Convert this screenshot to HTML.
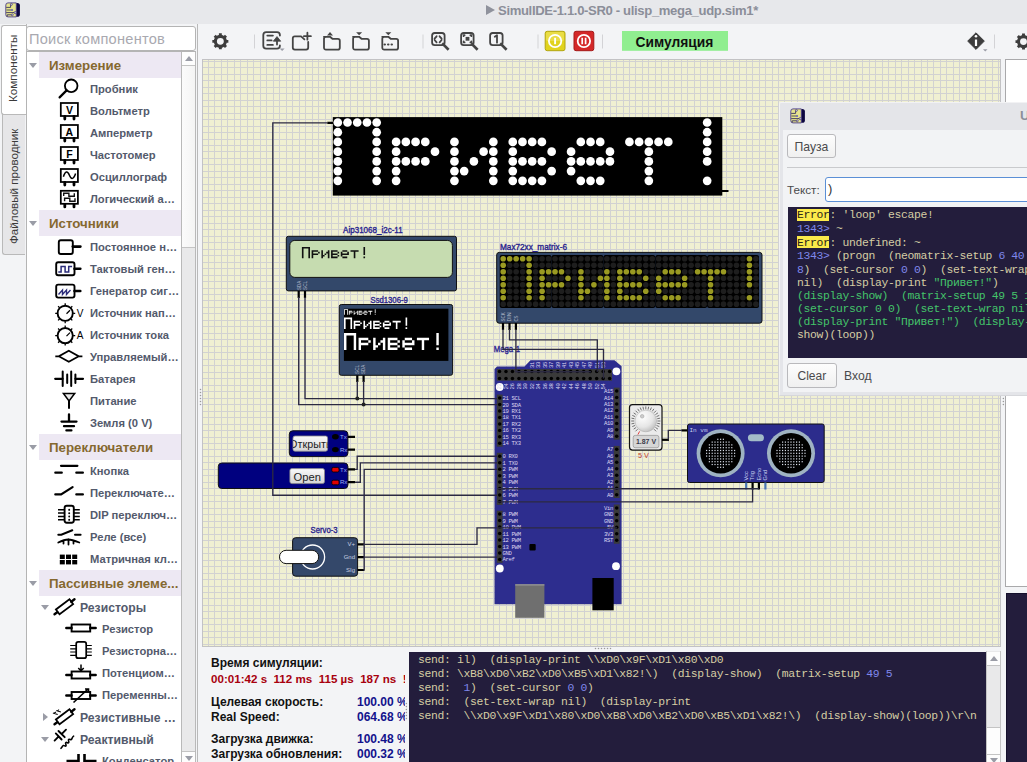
<!DOCTYPE html><html><head><meta charset="utf-8"><style>

*{box-sizing:border-box}
html,body{margin:0;padding:0}
body{width:1027px;height:762px;overflow:hidden;position:relative;background:#f3f4f6;font-family:"Liberation Sans",sans-serif}
.a{position:absolute}
.ti{position:absolute;left:0;white-space:pre;font-weight:bold;font-size:11px;color:#4f5668}
.cat{position:absolute;left:13px;width:142px;height:26px;background:#ede8f3}
.cat b{position:absolute;left:10px;top:5px;font-size:13px;color:#84672f;white-space:pre;letter-spacing:0.15px}
.arr{position:absolute;width:0;height:0;border-left:4px solid transparent;border-right:4px solid transparent;border-top:5px solid #9a9ca6}
.arr2{position:absolute;width:0;height:0;border-top:4px solid transparent;border-bottom:4px solid transparent;border-left:5px solid #9a9ca6}
.mono{font-family:"Liberation Mono",monospace}

</style></head><body>
<div class="a" style="left:0;top:0;width:1027px;height:24px;background:#e7e8eb"></div>
<svg class="a" style="left:0;top:0" width="24" height="22"><g transform="translate(0 0)"><rect x="14" y="3" width="5.9" height="13.8" rx="2.6" fill="#0c0640"/><path d="M8 2.9H16.3V16.9H8A2.2 2.2 0 0 1 5.8 14.7V5.1A2.2 2.2 0 0 1 8 2.9Z" fill="#e6e48e" stroke="#4a3c86" stroke-width="0.9"/><path d="M6.2 7.4H10.6V4.6M6.2 12.6H14.8M7.2 16.5V14.8H11.8" stroke="#3a3360" stroke-width="0.9" fill="none"/><path d="M6.4 10H11.2" stroke="#8c8a6a" stroke-width="1.6"/><circle cx="11.4" cy="4.4" r="1" fill="#c8c0ec" stroke="#3a3360" stroke-width="0.6"/><circle cx="12" cy="10" r="1.1" fill="#6a62b4"/><circle cx="15.2" cy="12.6" r="1.1" fill="#c8c0ec" stroke="#3a3360" stroke-width="0.6"/><circle cx="12.3" cy="14.8" r="1" fill="#c8c0ec" stroke="#3a3360" stroke-width="0.6"/></g></svg>
<div class="a" style="left:486px;top:5px;width:0;height:0;border-top:5px solid transparent;border-bottom:5px solid transparent;border-left:9px solid #8f929c"></div>
<div class="a" style="left:498px;top:2.5px;white-space:pre;font-weight:bold;font-size:13.1px;letter-spacing:-0.35px;color:#8b8e99">SimulIDE-1.1.0-SR0 - ulisp_mega_udp.sim1*</div>
<div class="a" style="left:1px;top:25px;width:26px;height:90px;background:#fff;border:1px solid #b9b9b9;border-right:none;border-radius:3px 0 0 3px"></div>
<div class="a" style="left:6px;top:102px;transform-origin:0 0;transform:rotate(-90deg);white-space:pre;font-size:11.7px;color:#3a3a3a;line-height:14px">Компоненты</div>
<div class="a" style="left:2px;top:114px;width:23px;height:141px;background:#e6e6e8;border:1px solid #b9b9b9;border-right:none;border-radius:0 0 0 3px"></div>
<div class="a" style="left:7px;top:243.5px;transform-origin:0 0;transform:rotate(-90deg);white-space:pre;font-size:11.6px;color:#3a3a3a;line-height:14px">Файловый проводник</div>
<div class="a" style="left:26px;top:24px;width:1px;height:738px;background:#b9b9b9"></div>
<div class="a" style="left:26px;top:26px;width:170px;height:25px;background:#fff;border:1px solid #b4b4b4;border-radius:3px"></div>
<div class="a" style="left:29px;top:30px;white-space:pre;font-size:14.6px;letter-spacing:0.25px;color:#a9a9b0;line-height:18px">Поиск компонентов</div>
<div class="a" style="left:26px;top:51px;width:170px;height:711px;background:#fff;border:1px solid #b4b4b4;border-bottom:none"></div>
<div class="a" style="left:181px;top:52px;width:15px;height:710px;background:#e9e9ea;border-left:1px solid #b9b9b9;border-right:1px solid #b9b9b9"></div>
<div class="a" style="left:182px;top:52px;width:13px;height:14px;background:#fdfdfd;border-bottom:1px solid #c4c4c4"></div>
<div class="a" style="left:185px;top:56px;width:0;height:0;border-left:4px solid transparent;border-right:4px solid transparent;border-bottom:5px solid #9a9ca6"></div>
<div class="a" style="left:182px;top:66px;width:13px;height:182px;background:linear-gradient(90deg,#fbfbfb,#f4f4f4);border-bottom:1px solid #c4c4c4"></div>
<div class="a" style="left:182px;top:751px;width:13px;height:11px;background:#fdfdfd;border-top:1px solid #c4c4c4"></div>
<div class="a" style="left:185px;top:756px;width:0;height:0;border-left:4px solid transparent;border-right:4px solid transparent;border-top:5px solid #9a9ca6"></div>
<div class="a" style="left:197px;top:24px;width:1px;height:738px;background:#b9b9b9"></div>
<div class="a" style="left:39px;top:52px;width:142px;height:26px;background:#ede8f3"></div>
<div class="arr" style="left:29px;top:63px"></div>
<div class="a" style="left:49px;top:58px;white-space:pre;font-weight:bold;font-size:13.3px;color:#85682f;line-height:16px">Измерение</div>
<div class="a" style="left:39px;top:210px;width:142px;height:26px;background:#ede8f3"></div>
<div class="arr" style="left:29px;top:221px"></div>
<div class="a" style="left:49px;top:216px;white-space:pre;font-weight:bold;font-size:13.3px;color:#85682f;line-height:16px">Источники</div>
<div class="a" style="left:39px;top:434px;width:142px;height:26px;background:#ede8f3"></div>
<div class="arr" style="left:29px;top:445px"></div>
<div class="a" style="left:49px;top:440px;white-space:pre;font-weight:bold;font-size:13.3px;color:#85682f;line-height:16px">Переключатели</div>
<div class="a" style="left:39px;top:570px;width:142px;height:26px;background:#ede8f3"></div>
<div class="arr" style="left:29px;top:581px"></div>
<div class="a" style="left:49px;top:576px;white-space:pre;font-weight:bold;font-size:13.3px;color:#85682f;line-height:16px">Пассивные элеме...</div>
<div class="a" style="left:90px;top:82px;white-space:pre;font-weight:bold;font-size:11.2px;color:#535a6c;line-height:14px">Пробник</div>
<div class="a" style="left:90px;top:104px;white-space:pre;font-weight:bold;font-size:11.2px;color:#535a6c;line-height:14px">Вольтметр</div>
<div class="a" style="left:90px;top:126px;white-space:pre;font-weight:bold;font-size:11.2px;color:#535a6c;line-height:14px">Амперметр</div>
<div class="a" style="left:90px;top:148px;white-space:pre;font-weight:bold;font-size:11.2px;color:#535a6c;line-height:14px">Частотомер</div>
<div class="a" style="left:90px;top:170px;white-space:pre;font-weight:bold;font-size:11.2px;color:#535a6c;line-height:14px">Осциллограф</div>
<div class="a" style="left:90px;top:192px;white-space:pre;font-weight:bold;font-size:11.2px;color:#535a6c;line-height:14px">Логический а…</div>
<div class="a" style="left:90px;top:240px;white-space:pre;font-weight:bold;font-size:11.2px;color:#535a6c;line-height:14px">Постоянное н…</div>
<div class="a" style="left:90px;top:262px;white-space:pre;font-weight:bold;font-size:11.2px;color:#535a6c;line-height:14px">Тактовый ген…</div>
<div class="a" style="left:90px;top:284px;white-space:pre;font-weight:bold;font-size:11.2px;color:#535a6c;line-height:14px">Генератор сиг…</div>
<div class="a" style="left:90px;top:306px;white-space:pre;font-weight:bold;font-size:11.2px;color:#535a6c;line-height:14px">Источник нап…</div>
<div class="a" style="left:90px;top:328px;white-space:pre;font-weight:bold;font-size:11.2px;color:#535a6c;line-height:14px">Источник тока</div>
<div class="a" style="left:90px;top:350px;white-space:pre;font-weight:bold;font-size:11.2px;color:#535a6c;line-height:14px">Управляемый…</div>
<div class="a" style="left:90px;top:372px;white-space:pre;font-weight:bold;font-size:11.2px;color:#535a6c;line-height:14px">Батарея</div>
<div class="a" style="left:90px;top:394px;white-space:pre;font-weight:bold;font-size:11.2px;color:#535a6c;line-height:14px">Питание</div>
<div class="a" style="left:90px;top:416px;white-space:pre;font-weight:bold;font-size:11.2px;color:#535a6c;line-height:14px">Земля (0 V)</div>
<div class="a" style="left:90px;top:464px;white-space:pre;font-weight:bold;font-size:11.2px;color:#535a6c;line-height:14px">Кнопка</div>
<div class="a" style="left:90px;top:486px;white-space:pre;font-weight:bold;font-size:11.2px;color:#535a6c;line-height:14px">Переключате…</div>
<div class="a" style="left:90px;top:508px;white-space:pre;font-weight:bold;font-size:11.2px;color:#535a6c;line-height:14px">DIP переключ…</div>
<div class="a" style="left:90px;top:530px;white-space:pre;font-weight:bold;font-size:11.2px;color:#535a6c;line-height:14px">Реле (все)</div>
<div class="a" style="left:90px;top:552px;white-space:pre;font-weight:bold;font-size:11.2px;color:#535a6c;line-height:14px">Матричная кл…</div>
<div class="arr" style="left:41px;top:605px"></div>
<div class="a" style="left:80px;top:599.8px;white-space:pre;font-weight:bold;font-size:12.2px;color:#535a6c;line-height:16px">Резисторы</div>
<div class="arr2" style="left:43px;top:713px"></div>
<div class="a" style="left:80px;top:709.8px;white-space:pre;font-weight:bold;font-size:12.2px;color:#535a6c;line-height:16px">Резистивные …</div>
<div class="arr" style="left:41px;top:737px"></div>
<div class="a" style="left:80px;top:731.8px;white-space:pre;font-weight:bold;font-size:12.2px;color:#535a6c;line-height:16px">Реактивный</div>
<div class="a" style="left:102px;top:622px;white-space:pre;font-weight:bold;font-size:11.2px;color:#535a6c;line-height:14px">Резистор</div>
<div class="a" style="left:102px;top:644px;white-space:pre;font-weight:bold;font-size:11.2px;color:#535a6c;line-height:14px">Резисторна…</div>
<div class="a" style="left:102px;top:666px;white-space:pre;font-weight:bold;font-size:11.2px;color:#535a6c;line-height:14px">Потенциом…</div>
<div class="a" style="left:102px;top:688px;white-space:pre;font-weight:bold;font-size:11.2px;color:#535a6c;line-height:14px">Переменны…</div>
<div class="a" style="left:102px;top:754px;white-space:pre;font-weight:bold;font-size:11.2px;color:#535a6c;line-height:14px">Конденсатор</div>
<svg class="a" style="left:0;top:0" width="200" height="762"><circle cx="71.2" cy="85.8" r="6.3" stroke="#000" fill="none" stroke-width="1.8"/><path d="M66.6 90.4L59.6 97.4" stroke="#000" fill="none" stroke-width="2.2" stroke-linecap="round"/><rect x="60.8" y="103.0" width="17.1" height="13" stroke="#000" fill="none" stroke-width="1.75"/><path d="M64.8 116.5v2.6M74 116.5v2.6" stroke="#000" fill="none" stroke-width="2.8" stroke-linecap="round"/><text x="69.4" y="113.6" font-family="Liberation Sans" font-weight="bold" font-size="10.5" text-anchor="middle" fill="#000">V</text><rect x="60.8" y="125.0" width="17.1" height="13" stroke="#000" fill="none" stroke-width="1.75"/><path d="M64.8 138.5v2.6M74 138.5v2.6" stroke="#000" fill="none" stroke-width="2.8" stroke-linecap="round"/><text x="69.4" y="135.6" font-family="Liberation Sans" font-weight="bold" font-size="10.5" text-anchor="middle" fill="#000">A</text><rect x="60.8" y="147.0" width="17.1" height="13" stroke="#000" fill="none" stroke-width="1.75"/><path d="M64.8 160.5v2.6M74 160.5v2.6" stroke="#000" fill="none" stroke-width="2.8" stroke-linecap="round"/><text x="69.4" y="157.6" font-family="Liberation Sans" font-weight="bold" font-size="10.5" text-anchor="middle" fill="#000">F</text><rect x="60.8" y="169.0" width="17.1" height="13" stroke="#000" fill="none" stroke-width="1.75"/><path d="M64.8 182.5v2.6M74 182.5v2.6" stroke="#000" fill="none" stroke-width="2.8" stroke-linecap="round"/><path d="M63.4 176.8C65.3 170.8 67.6 170.8 69.4 175.2S73.6 179.8 75.6 173.6" stroke="#000" fill="none" stroke-width="1.5"/><rect x="60.8" y="190.8" width="17.1" height="13" stroke="#000" fill="none" stroke-width="1.75"/><path d="M64.8 204.3v2.6M74 204.3v2.6" stroke="#000" fill="none" stroke-width="2.8" stroke-linecap="round"/><path d="M63.7 196.1v-2.9h5.2v3.1h5.4v-3.1M64.6 201.3v-3.1h5.2v3.1h5.2v-3.1" stroke="#111" fill="none" stroke-width="1.4"/><rect x="58.8" y="240.2" width="14" height="13.8" rx="2" stroke="#000" fill="none" stroke-width="1.9"/><path d="M72.8 246.6h7.6" stroke="#000" fill="none" stroke-width="2.6" stroke-linecap="round"/><rect x="56.2" y="262.3" width="18.3" height="13" rx="2" stroke="#000" fill="none" stroke-width="1.9"/><path d="M74.5 268.8h5.8" stroke="#000" fill="none" stroke-width="2.6" stroke-linecap="round"/><path d="M58.3 272h2.8v-5.5h4v5.5h3.6v-5.5h3.4" stroke="#2b2c7a" fill="none" stroke-width="1.5"/><rect x="56.2" y="284.6" width="18.3" height="13" rx="2" stroke="#000" fill="none" stroke-width="1.9"/><path d="M74.5 291h5.8" stroke="#000" fill="none" stroke-width="2.6" stroke-linecap="round"/><path d="M58.5 294.5l4-4.5v4.5l4-4.5v4.5l4-4.5" stroke="#2b2c7a" fill="none" stroke-width="1.4"/><circle cx="65.2" cy="313.3" r="7.6" stroke="#000" fill="none" stroke-width="1.9"/><path d="M59.5 307.6L58.1 306.2M65.2 305.3L65.2 303.3M70.9 307.6L72.3 306.2M73.2 313.3L75.2 313.3M57.2 313.3L55.2 313.3M59.5 319.0L58.1 320.4M70.9 319.0L72.3 320.4M65.2 321.3L65.2 323.3" stroke="#000" fill="none" stroke-width="1.3"/><path d="M66.5 313.8L70 310.3" stroke="#000" fill="none" stroke-width="1.3"/><text x="76.8" y="317.1" font-family="Liberation Sans" font-size="10" fill="#000">V</text><circle cx="65.2" cy="335.6" r="7.6" stroke="#000" fill="none" stroke-width="1.9"/><path d="M59.5 329.9L58.1 328.5M65.2 327.6L65.2 325.6M70.9 329.9L72.3 328.5M73.2 335.6L75.2 335.6M57.2 335.6L55.2 335.6M59.5 341.3L58.1 342.7M70.9 341.3L72.3 342.7M65.2 343.6L65.2 345.6" stroke="#000" fill="none" stroke-width="1.3"/><path d="M66.5 336.1L70 332.6" stroke="#000" fill="none" stroke-width="1.3"/><text x="76.8" y="339.40000000000003" font-family="Liberation Sans" font-size="10" fill="#000">A</text><path d="M55.3 356.3h3.5l10-5.5l10 5.5h3.6M58.8 356.3l10 5.5l10-5.5" stroke="#000" fill="none" stroke-width="1.7"/><path d="M55.2 378.8h7.4M75.4 378.8h7.6" stroke="#000" fill="none" stroke-width="2.2" stroke-linecap="round"/><path d="M62.7 371.6v14.4M71.2 371.6v14.4" stroke="#000" fill="none" stroke-width="2" stroke-linecap="round"/><path d="M67.2 374.5v8.6M75.4 374.5v8.6" stroke="#000" fill="none" stroke-width="2" stroke-linecap="round"/><path d="M63.4 393.4h11.3l-5.65 7.6z" stroke="#000" fill="#e8e8e8" stroke-width="1.5"/><path d="M69 401v7" stroke="#000" stroke-width="2" stroke-linecap="round"/><path d="M69 414.5v7M61.5 421.6h15M64 426.2h10M66.4 430.4h5" stroke="#000" fill="none" stroke-width="2.3" stroke-linecap="round"/><path d="M61 465.8h16.4M55.3 472.7h6.5M76.3 472.7h6.6" stroke="#000" fill="none" stroke-width="2.2" stroke-linecap="round"/><path d="M55.3 494.4h5.8l11.5-7.3M76.3 494.4h6.6" stroke="#000" fill="none" stroke-width="2.2" stroke-linecap="round"/><rect x="64.6" y="505.7" width="9.2" height="17" rx="2.2" stroke="#000" fill="none" stroke-width="1.9"/><path d="M58 509.8h6.5M58 513.1h6.5M58 516.5h6.5M58 519.8h6.5M73.8 509.8h6M73.8 513.1h6M73.8 516.5h6M73.8 519.8h6" stroke="#000" fill="none" stroke-width="1.5"/><path d="M69.2 509.8v0.1M69.2 513.1v0.1M69.2 516.5v0.1M69.2 519.8v0.1" stroke="#000" fill="none" stroke-width="1.9" stroke-linecap="round"/><path d="M58.3 534.8h3l11-4.5M75 534.8h5.6" stroke="#000" fill="none" stroke-width="2" stroke-linecap="round"/><path d="M58.3 542.5c4-2 7-3 10-3s6 1 11 3M63.5 540.5v3M68.5 539.5v5M73.5 540.5v3" stroke="#000" fill="none" stroke-width="1.8" stroke-linecap="round"/><rect x="59.8" y="554.6" width="5" height="4.4" fill="#000"/><rect x="59.8" y="560.0" width="5" height="4.4" fill="#000"/><rect x="66.0" y="554.6" width="5" height="4.4" fill="#000"/><rect x="66.0" y="560.0" width="5" height="4.4" fill="#000"/><rect x="72.2" y="554.6" width="5" height="4.4" fill="#000"/><rect x="72.2" y="560.0" width="5" height="4.4" fill="#000"/><g transform="translate(64.5 606.8) rotate(-37)"><path d="M-12.5 0h3.5M8.5 0h4" stroke="#000" fill="none" stroke-width="2.4" stroke-linecap="round"/><rect x="-8.5" y="-3" width="17" height="6" stroke="#000" fill="none" stroke-width="1.8"/></g><path d="M66.3 628h5.3M90.2 628h5.5" stroke="#000" fill="none" stroke-width="2.4" stroke-linecap="round"/><rect x="71.6" y="624.5" width="18.6" height="7" stroke="#000" fill="none" stroke-width="1.9"/><rect x="76.2" y="641.9" width="10" height="16.3" rx="2" stroke="#000" fill="none" stroke-width="1.7"/><path d="M70.2 645.5h6M70.2 648.8h6M70.2 652h6M70.2 655.3h6M86.2 645.5h5.6M86.2 648.8h5.6M86.2 652h5.6M86.2 655.3h5.6" stroke="#000" fill="none" stroke-width="1.2"/><path d="M66.3 675h5.3M90.2 675h5.5" stroke="#000" fill="none" stroke-width="2.4" stroke-linecap="round"/><rect x="71.6" y="671.5" width="18.6" height="7" stroke="#000" fill="none" stroke-width="1.9"/><path d="M81 664.5v6M78.3 668l2.7 3l2.7-3" stroke="#000" fill="none" stroke-width="1.5"/><path d="M66.3 695.5h5.3M90.2 695.5h5.5" stroke="#000" fill="none" stroke-width="2.4" stroke-linecap="round"/><rect x="71.6" y="692" width="18.6" height="7" stroke="#000" fill="none" stroke-width="1.9"/><path d="M73.5 702.5l14.5-13.5M85 689h3.5v3" stroke="#000" fill="none" stroke-width="1.6"/><g transform="translate(64.5 716.8) rotate(-37)"><path d="M-12.5 0h3.5M8.5 0h4" stroke="#000" fill="none" stroke-width="2.4" stroke-linecap="round"/><rect x="-8.5" y="-3" width="17" height="6" stroke="#000" fill="none" stroke-width="1.8"/><path d="M-4 -6l-3 -4M0 -6l-3 -4M-6 -9h2M-2 -9h2" stroke="#000" fill="none" stroke-width="1"/></g><path d="M55.8 733.4L61.6 739.5M58.5 731L64.7 737.2M58.7 736.4L54.6 740.6M61.6 734.1L66 729.7" stroke="#000" fill="none" stroke-width="1.9" stroke-linecap="round"/><path d="M61 748.3c1-0.5 1.2-2.2 2.2-2.7c1.2-0.5 2.2 1.2 2.8 0.2c0.6-1-1.2-2.4-0.2-3.2c1-0.8 2.2 1 2.9 0c0.7-1-1-2.4 0-3.2c1-0.8 2.2 0.9 2.9-0.1c0.5-0.7 0.8-2.6 2-3.2" stroke="#000" fill="none" stroke-width="1.6" stroke-linecap="round"/><path d="M66.5 761h12M84.5 761h12M78.5 754v10M84.5 754v10" stroke="#000" fill="none" stroke-width="2.6"/></svg>
<svg class="a" style="left:0;top:0" width="1027" height="60"><circle cx="220.35" cy="41.35" r="5.0" fill="none" stroke="#3d3d3d" stroke-width="3.1"/><path d="M220.35 35.85L220.35 33.35M224.24 37.46L226.01 35.69M225.85 41.35L228.35 41.35M224.24 45.24L226.01 47.01M220.35 46.85L220.35 49.35M216.46 45.24L214.69 47.01M214.85 41.35L212.35 41.35M216.46 37.46L214.69 35.69" stroke="#3d3d3d" stroke-width="2.9" stroke-linecap="butt"/><rect x="254.0" y="34.5" width="1" height="14" fill="#d3d3d6"/><rect x="422.5" y="34.5" width="1" height="14" fill="#d3d3d6"/><rect x="537.5" y="34.5" width="1" height="14" fill="#d3d3d6"/><rect x="602.0" y="34.5" width="1" height="14" fill="#d3d3d6"/><rect x="994.0" y="34.5" width="1" height="14" fill="#d3d3d6"/><path d="M279.9 35.5v-0.5a2.9 2.9 0 0 0-2.9-2.9h-10.8a2.9 2.9 0 0 0-2.9 2.9v10.8a2.9 2.9 0 0 0 2.9 2.9h10.8a2.9 2.9 0 0 0 2.9-2.9v-0.3" stroke="#444" fill="none" stroke-width="1.8" stroke-linejoin="round" stroke-linecap="round" stroke-width="1.9"/><path d="M267.3 35.6h5.6M267.3 40.4h4.3M267.3 44.9h5.6" stroke="#444" fill="none" stroke-width="1.8" stroke-linejoin="round" stroke-linecap="round" stroke-width="2"/><path d="M277 44.6v-6" stroke="#444" fill="none" stroke-width="1.8" stroke-linejoin="round" stroke-linecap="round" stroke-width="2"/><path d="M273.3 41.2l3.7-4.6l3.7 4.6z" fill="#444" stroke="#444" stroke-width="0.8" stroke-linejoin="round"/><path d="M279.6 48.6h5l-2.5 2.3z" fill="#9a9ca6"/><path d="M308.2 42v5.6a2 2 0 0 1-2 2h-11.4a2 2 0 0 1-2-2v-9.3a2 2 0 0 1 2-2h6.3l3.3 3" stroke="#444" fill="none" stroke-width="1.8" stroke-linejoin="round" stroke-linecap="round" stroke-width="1.9"/><path d="M307.4 32.7v7M303.9 36.2h7" stroke="#444" fill="none" stroke-width="1.8" stroke-linejoin="round" stroke-linecap="round" stroke-width="1.9"/><path d="M323.9 36.8h6.1l2.4 2h5.5a1.9 1.9 0 0 1 1.9 1.9v7a1.9 1.9 0 0 1-1.9 1.9h-12a1.9 1.9 0 0 1-1.9-1.9v-9a1.9 1.9 0 0 1 1.9-1.9z" stroke="#444" fill="none" stroke-width="1.8" stroke-linejoin="round" stroke-linecap="round" stroke-width="1.9"/><path d="M330 32l3 3.6h-6z" fill="#444"/><path d="M353.0 36.8h6.1l2.4 2h5.5a1.9 1.9 0 0 1 1.9 1.9v7a1.9 1.9 0 0 1-1.9 1.9h-12a1.9 1.9 0 0 1-1.9-1.9v-9a1.9 1.9 0 0 1 1.9-1.9z" stroke="#444" fill="none" stroke-width="1.8" stroke-linejoin="round" stroke-linecap="round" stroke-width="1.9"/><path d="M359.1 35.3l3-3h-6z" fill="#444"/><path d="M382.2 36.8h6.1l2.4 2h5.5a1.9 1.9 0 0 1 1.9 1.9v7a1.9 1.9 0 0 1-1.9 1.9h-12a1.9 1.9 0 0 1-1.9-1.9v-9a1.9 1.9 0 0 1 1.9-1.9z" stroke="#444" fill="none" stroke-width="1.8" stroke-linejoin="round" stroke-linecap="round" stroke-width="1.9"/><path d="M388.3 35.3l3-3h-6z" fill="#444"/><path d="M384.6 44.5h0.3M388.1 44.5h0.3M391.6 44.5h0.3" stroke="#444" stroke-width="2.2" stroke-linecap="round"/><rect x="432.1" y="33" width="12.5" height="12.2" rx="2.6" stroke="#444" fill="none" stroke-width="1.8" stroke-linejoin="round" stroke-linecap="round" stroke-width="1.9"/><path d="M443.1 44.2l4.6 4.6" stroke="#444" stroke-width="2.6" stroke-linecap="square"/><path d="M436.6 36.3l-2 2.3M434.6 40l2 2.3M439.6 36.3l2 2.3M441.6 40l-2 2.3" stroke="#444" fill="none" stroke-width="1.8" stroke-linejoin="round" stroke-linecap="round" stroke-width="1.3"/><rect x="461.1" y="33" width="12.5" height="12.2" rx="2.6" stroke="#444" fill="none" stroke-width="1.8" stroke-linejoin="round" stroke-linecap="round" stroke-width="1.9"/><path d="M472.1 44.2l4.6 4.6" stroke="#444" stroke-width="2.6" stroke-linecap="square"/><rect x="465.6" y="36.9" width="3.8" height="3.8" fill="#444"/><path d="M463.6 36.2v-1h1M470.4 35.2h1v1M471.4 41.4v1h-1M464.6 42.4h-1v-1" stroke="#444" fill="none" stroke-width="1.8" stroke-linejoin="round" stroke-linecap="round" stroke-width="1.1" stroke-linecap="butt"/><rect x="490.1" y="33" width="12.5" height="12.2" rx="2.6" stroke="#444" fill="none" stroke-width="1.8" stroke-linejoin="round" stroke-linecap="round" stroke-width="1.9"/><path d="M501.1 44.2l4.6 4.6" stroke="#444" stroke-width="2.6" stroke-linecap="square"/><path d="M494.8 36.8l2.2-1.6v7.5" stroke="#444" fill="none" stroke-width="1.8" stroke-linejoin="round" stroke-linecap="round" stroke-width="1.5" stroke-linecap="butt"/><rect x="545.2" y="31.3" width="19.8" height="19.4" rx="2" fill="#e1d31e" stroke="#b3a612" stroke-width="1"/><rect x="546" y="32" width="18" height="9" rx="1.5" fill="#f0e560" opacity="0.6"/><circle cx="555.1" cy="41" r="6.2" fill="none" stroke="#fff" stroke-width="1.8"/><path d="M555.1 37.8v6.4" stroke="#fff" stroke-width="1.9"/><rect x="574" y="31.3" width="19.8" height="19.4" rx="2" fill="#d42828" stroke="#a51818" stroke-width="1"/><circle cx="583.9" cy="41" r="6.2" fill="none" stroke="#fff" stroke-width="1.8"/><path d="M582.2 37.8v6.4M585.6 37.8v6.4" stroke="#fff" stroke-width="1.7"/><rect x="622" y="31" width="106" height="19.8" fill="#90ee90"/><path d="M976 32.8l8.3 8.3l-8.3 8.3l-8.3-8.3z" fill="#3d3d3d" stroke="#3d3d3d" stroke-width="1" stroke-linejoin="round"/><path d="M976 39.5v6.5" stroke="#fff" stroke-width="2.2"/><circle cx="976" cy="36.2" r="1.3" fill="#fff"/><path d="M983 49.3h4.5l-2.25 2.2z" fill="#9a9ca6"/><circle cx="1023.5" cy="41.6" r="5.0" fill="none" stroke="#3d3d3d" stroke-width="3.1"/><path d="M1023.50 36.10L1023.50 33.60M1027.39 37.71L1029.16 35.94M1029.00 41.60L1031.50 41.60M1027.39 45.49L1029.16 47.26M1023.50 47.10L1023.50 49.60M1019.61 45.49L1017.84 47.26M1018.00 41.60L1015.50 41.60M1019.61 37.71L1017.84 35.94" stroke="#3d3d3d" stroke-width="2.9" stroke-linecap="butt"/></svg>
<div class="a" style="left:635.6px;top:33.7px;white-space:pre;font-weight:bold;font-size:13.8px;color:#101010;line-height:17px">Симуляция</div>
<svg class="a" style="left:0;top:0" width="1027" height="762"><defs><clipPath id="cv"><rect x="203" y="60" width="797" height="586"/></clipPath><radialGradient id="knob" cx="0.35" cy="0.3" r="0.8"><stop offset="0" stop-color="#ffffff"/><stop offset="0.6" stop-color="#e6e6e6"/><stop offset="1" stop-color="#b8b8b8"/></radialGradient><linearGradient id="btn" x1="0" y1="0" x2="0" y2="1"><stop offset="0" stop-color="#fafafa"/><stop offset="1" stop-color="#d4d4d4"/></linearGradient></defs><rect x="202" y="59" width="799" height="588" fill="#c2c2c4"/><rect x="203" y="60" width="797" height="586" fill="#f0f0d2"/><path d="M208.5 60V646M214.5 60V646M221.5 60V646M227.5 60V646M234.5 60V646M240.5 60V646M247.5 60V646M253.5 60V646M260.5 60V646M266.5 60V646M273.5 60V646M279.5 60V646M286.5 60V646M292.5 60V646M299.5 60V646M305.5 60V646M312.5 60V646M318.5 60V646M325.5 60V646M331.5 60V646M338.5 60V646M344.5 60V646M350.5 60V646M357.5 60V646M363.5 60V646M370.5 60V646M376.5 60V646M383.5 60V646M389.5 60V646M396.5 60V646M402.5 60V646M409.5 60V646M415.5 60V646M422.5 60V646M428.5 60V646M435.5 60V646M441.5 60V646M448.5 60V646M454.5 60V646M461.5 60V646M467.5 60V646M474.5 60V646M480.5 60V646M487.5 60V646M493.5 60V646M499.5 60V646M506.5 60V646M512.5 60V646M519.5 60V646M525.5 60V646M532.5 60V646M538.5 60V646M545.5 60V646M551.5 60V646M558.5 60V646M564.5 60V646M571.5 60V646M577.5 60V646M584.5 60V646M590.5 60V646M597.5 60V646M603.5 60V646M610.5 60V646M616.5 60V646M623.5 60V646M629.5 60V646M635.5 60V646M642.5 60V646M648.5 60V646M655.5 60V646M661.5 60V646M668.5 60V646M674.5 60V646M681.5 60V646M687.5 60V646M694.5 60V646M700.5 60V646M707.5 60V646M713.5 60V646M720.5 60V646M726.5 60V646M733.5 60V646M739.5 60V646M746.5 60V646M752.5 60V646M759.5 60V646M765.5 60V646M772.5 60V646M778.5 60V646M784.5 60V646M791.5 60V646M797.5 60V646M804.5 60V646M810.5 60V646M817.5 60V646M823.5 60V646M830.5 60V646M836.5 60V646M843.5 60V646M849.5 60V646M856.5 60V646M862.5 60V646M869.5 60V646M875.5 60V646M882.5 60V646M888.5 60V646M895.5 60V646M901.5 60V646M908.5 60V646M914.5 60V646M921.5 60V646M927.5 60V646M933.5 60V646M940.5 60V646M946.5 60V646M953.5 60V646M959.5 60V646M966.5 60V646M972.5 60V646M979.5 60V646M985.5 60V646M992.5 60V646M998.5 60V646M203 61.5H1000M203 67.5H1000M203 74.5H1000M203 80.5H1000M203 87.5H1000M203 93.5H1000M203 100.5H1000M203 106.5H1000M203 113.5H1000M203 119.5H1000M203 126.5H1000M203 132.5H1000M203 139.5H1000M203 145.5H1000M203 151.5H1000M203 158.5H1000M203 164.5H1000M203 171.5H1000M203 177.5H1000M203 184.5H1000M203 190.5H1000M203 197.5H1000M203 203.5H1000M203 210.5H1000M203 216.5H1000M203 223.5H1000M203 229.5H1000M203 236.5H1000M203 242.5H1000M203 249.5H1000M203 255.5H1000M203 262.5H1000M203 268.5H1000M203 275.5H1000M203 281.5H1000M203 288.5H1000M203 294.5H1000M203 300.5H1000M203 307.5H1000M203 313.5H1000M203 320.5H1000M203 326.5H1000M203 333.5H1000M203 339.5H1000M203 346.5H1000M203 352.5H1000M203 359.5H1000M203 365.5H1000M203 372.5H1000M203 378.5H1000M203 385.5H1000M203 391.5H1000M203 398.5H1000M203 404.5H1000M203 411.5H1000M203 417.5H1000M203 424.5H1000M203 430.5H1000M203 437.5H1000M203 443.5H1000M203 449.5H1000M203 456.5H1000M203 462.5H1000M203 469.5H1000M203 475.5H1000M203 482.5H1000M203 488.5H1000M203 495.5H1000M203 501.5H1000M203 508.5H1000M203 514.5H1000M203 521.5H1000M203 527.5H1000M203 534.5H1000M203 540.5H1000M203 547.5H1000M203 553.5H1000M203 560.5H1000M203 566.5H1000M203 573.5H1000M203 579.5H1000M203 586.5H1000M203 592.5H1000M203 598.5H1000M203 605.5H1000M203 611.5H1000M203 618.5H1000M203 624.5H1000M203 631.5H1000M203 637.5H1000M203 644.5H1000" stroke="#d2d2d2" stroke-width="1" fill="none"/><g clip-path="url(#cv)"><rect x="332.8" y="117.1" width="389.5" height="78.5" fill="#000"/><path d="M327.3 122.8H333M722 191H728.5" stroke="#000" stroke-width="2.2"/><g fill="#fff"><circle cx="337.80" cy="122.50" r="4.35"/><circle cx="347.52" cy="122.50" r="4.35"/><circle cx="357.24" cy="122.50" r="4.35"/><circle cx="366.96" cy="122.50" r="4.35"/><circle cx="376.68" cy="122.50" r="4.35"/><circle cx="337.80" cy="132.22" r="4.35"/><circle cx="376.68" cy="132.22" r="4.35"/><circle cx="337.80" cy="141.94" r="4.35"/><circle cx="376.68" cy="141.94" r="4.35"/><circle cx="337.80" cy="151.66" r="4.35"/><circle cx="376.68" cy="151.66" r="4.35"/><circle cx="337.80" cy="161.38" r="4.35"/><circle cx="376.68" cy="161.38" r="4.35"/><circle cx="337.80" cy="171.10" r="4.35"/><circle cx="376.68" cy="171.10" r="4.35"/><circle cx="337.80" cy="180.82" r="4.35"/><circle cx="376.68" cy="180.82" r="4.35"/><circle cx="396.12" cy="141.94" r="4.35"/><circle cx="405.84" cy="141.94" r="4.35"/><circle cx="415.56" cy="141.94" r="4.35"/><circle cx="425.28" cy="141.94" r="4.35"/><circle cx="396.12" cy="151.66" r="4.35"/><circle cx="435.00" cy="151.66" r="4.35"/><circle cx="396.12" cy="161.38" r="4.35"/><circle cx="405.84" cy="161.38" r="4.35"/><circle cx="415.56" cy="161.38" r="4.35"/><circle cx="425.28" cy="161.38" r="4.35"/><circle cx="396.12" cy="171.10" r="4.35"/><circle cx="396.12" cy="180.82" r="4.35"/><circle cx="454.44" cy="141.94" r="4.35"/><circle cx="493.32" cy="141.94" r="4.35"/><circle cx="454.44" cy="151.66" r="4.35"/><circle cx="483.60" cy="151.66" r="4.35"/><circle cx="493.32" cy="151.66" r="4.35"/><circle cx="454.44" cy="161.38" r="4.35"/><circle cx="473.88" cy="161.38" r="4.35"/><circle cx="493.32" cy="161.38" r="4.35"/><circle cx="454.44" cy="171.10" r="4.35"/><circle cx="464.16" cy="171.10" r="4.35"/><circle cx="493.32" cy="171.10" r="4.35"/><circle cx="454.44" cy="180.82" r="4.35"/><circle cx="493.32" cy="180.82" r="4.35"/><circle cx="512.76" cy="141.94" r="4.35"/><circle cx="522.48" cy="141.94" r="4.35"/><circle cx="532.20" cy="141.94" r="4.35"/><circle cx="541.92" cy="141.94" r="4.35"/><circle cx="512.76" cy="151.66" r="4.35"/><circle cx="551.64" cy="151.66" r="4.35"/><circle cx="512.76" cy="161.38" r="4.35"/><circle cx="522.48" cy="161.38" r="4.35"/><circle cx="532.20" cy="161.38" r="4.35"/><circle cx="541.92" cy="161.38" r="4.35"/><circle cx="512.76" cy="171.10" r="4.35"/><circle cx="551.64" cy="171.10" r="4.35"/><circle cx="512.76" cy="180.82" r="4.35"/><circle cx="522.48" cy="180.82" r="4.35"/><circle cx="532.20" cy="180.82" r="4.35"/><circle cx="541.92" cy="180.82" r="4.35"/><circle cx="580.80" cy="141.94" r="4.35"/><circle cx="590.52" cy="141.94" r="4.35"/><circle cx="600.24" cy="141.94" r="4.35"/><circle cx="571.08" cy="151.66" r="4.35"/><circle cx="609.96" cy="151.66" r="4.35"/><circle cx="571.08" cy="161.38" r="4.35"/><circle cx="580.80" cy="161.38" r="4.35"/><circle cx="590.52" cy="161.38" r="4.35"/><circle cx="600.24" cy="161.38" r="4.35"/><circle cx="609.96" cy="161.38" r="4.35"/><circle cx="571.08" cy="171.10" r="4.35"/><circle cx="580.80" cy="180.82" r="4.35"/><circle cx="590.52" cy="180.82" r="4.35"/><circle cx="600.24" cy="180.82" r="4.35"/><circle cx="629.40" cy="141.94" r="4.35"/><circle cx="639.12" cy="141.94" r="4.35"/><circle cx="648.84" cy="141.94" r="4.35"/><circle cx="658.56" cy="141.94" r="4.35"/><circle cx="668.28" cy="141.94" r="4.35"/><circle cx="648.84" cy="151.66" r="4.35"/><circle cx="648.84" cy="161.38" r="4.35"/><circle cx="648.84" cy="171.10" r="4.35"/><circle cx="648.84" cy="180.82" r="4.35"/><circle cx="707.16" cy="122.50" r="4.35"/><circle cx="707.16" cy="132.22" r="4.35"/><circle cx="707.16" cy="141.94" r="4.35"/><circle cx="707.16" cy="151.66" r="4.35"/><circle cx="707.16" cy="161.38" r="4.35"/><circle cx="707.16" cy="180.82" r="4.35"/></g><rect x="286.3" y="236.3" width="170.2" height="54.6" rx="2" fill="#33486a" stroke="#111" stroke-width="1"/><rect x="289.8" y="240.4" width="162.6" height="37" rx="5" fill="#c6dcb0" stroke="#111" stroke-width="1"/><path d="M301.90 246.90h8.10v1.62h-8.10zM363.46 246.90h1.62v1.62h-1.62zM301.90 248.52h1.62v1.62h-1.62zM308.38 248.52h1.62v1.62h-1.62zM363.46 248.52h1.62v1.62h-1.62zM301.90 250.14h1.62v1.62h-1.62zM308.38 250.14h1.62v1.62h-1.62zM311.62 250.14h6.48v1.62h-6.48zM321.34 250.14h1.62v1.62h-1.62zM327.82 250.14h1.62v1.62h-1.62zM331.06 250.14h6.48v1.62h-6.48zM342.40 250.14h4.86v1.62h-4.86zM350.50 250.14h8.10v1.62h-8.10zM363.46 250.14h1.62v1.62h-1.62zM301.90 251.76h1.62v1.62h-1.62zM308.38 251.76h1.62v1.62h-1.62zM311.62 251.76h1.62v1.62h-1.62zM318.10 251.76h1.62v1.62h-1.62zM321.34 251.76h1.62v1.62h-1.62zM326.20 251.76h3.24v1.62h-3.24zM331.06 251.76h1.62v1.62h-1.62zM337.54 251.76h1.62v1.62h-1.62zM340.78 251.76h1.62v1.62h-1.62zM347.26 251.76h1.62v1.62h-1.62zM353.74 251.76h1.62v1.62h-1.62zM363.46 251.76h1.62v1.62h-1.62zM301.90 253.38h1.62v1.62h-1.62zM308.38 253.38h1.62v1.62h-1.62zM311.62 253.38h6.48v1.62h-6.48zM321.34 253.38h1.62v1.62h-1.62zM324.58 253.38h1.62v1.62h-1.62zM327.82 253.38h1.62v1.62h-1.62zM331.06 253.38h6.48v1.62h-6.48zM340.78 253.38h8.10v1.62h-8.10zM353.74 253.38h1.62v1.62h-1.62zM363.46 253.38h1.62v1.62h-1.62zM301.90 255.00h1.62v1.62h-1.62zM308.38 255.00h1.62v1.62h-1.62zM311.62 255.00h1.62v1.62h-1.62zM321.34 255.00h3.24v1.62h-3.24zM327.82 255.00h1.62v1.62h-1.62zM331.06 255.00h1.62v1.62h-1.62zM337.54 255.00h1.62v1.62h-1.62zM340.78 255.00h1.62v1.62h-1.62zM353.74 255.00h1.62v1.62h-1.62zM301.90 256.62h1.62v1.62h-1.62zM308.38 256.62h1.62v1.62h-1.62zM311.62 256.62h1.62v1.62h-1.62zM321.34 256.62h1.62v1.62h-1.62zM327.82 256.62h1.62v1.62h-1.62zM331.06 256.62h6.48v1.62h-6.48zM342.40 256.62h4.86v1.62h-4.86zM353.74 256.62h1.62v1.62h-1.62zM363.46 256.62h1.62v1.62h-1.62z" fill="#111"/><text x="343.1" y="233.3" font-size="8.8" textLength="59.6" lengthAdjust="spacingAndGlyphs" font-family="Liberation Sans" fill="#28228e" stroke="#28228e" stroke-width="0.35">Aip31068_i2c-11</text><path d="M298.7 291V298M305 291V298" stroke="#000" stroke-width="2.2"/><g font-family="Liberation Sans" font-size="5.6" fill="#b4bccc"><text transform="translate(300.5 290) rotate(-90)" textLength="9.2" lengthAdjust="spacingAndGlyphs">SDA</text><text transform="translate(306.8 290) rotate(-90)" textLength="9.2" lengthAdjust="spacingAndGlyphs">SCL</text></g><rect x="339.3" y="304.5" width="113.3" height="70.8" rx="2" fill="#33486a" stroke="#111" stroke-width="1"/><rect x="343.9" y="308.7" width="104.5" height="52.2" fill="#000"/><path d="M344.00 309.20h4.05v0.81h-4.05zM374.78 309.20h0.81v0.81h-0.81zM344.00 310.01h0.81v0.81h-0.81zM347.24 310.01h0.81v0.81h-0.81zM374.78 310.01h0.81v0.81h-0.81zM344.00 310.82h0.81v0.81h-0.81zM347.24 310.82h0.81v0.81h-0.81zM348.86 310.82h3.24v0.81h-3.24zM353.72 310.82h0.81v0.81h-0.81zM356.96 310.82h0.81v0.81h-0.81zM358.58 310.82h3.24v0.81h-3.24zM364.25 310.82h2.43v0.81h-2.43zM368.30 310.82h4.05v0.81h-4.05zM374.78 310.82h0.81v0.81h-0.81zM344.00 311.63h0.81v0.81h-0.81zM347.24 311.63h0.81v0.81h-0.81zM348.86 311.63h0.81v0.81h-0.81zM352.10 311.63h0.81v0.81h-0.81zM353.72 311.63h0.81v0.81h-0.81zM356.15 311.63h1.62v0.81h-1.62zM358.58 311.63h0.81v0.81h-0.81zM361.82 311.63h0.81v0.81h-0.81zM363.44 311.63h0.81v0.81h-0.81zM366.68 311.63h0.81v0.81h-0.81zM369.92 311.63h0.81v0.81h-0.81zM374.78 311.63h0.81v0.81h-0.81zM344.00 312.44h0.81v0.81h-0.81zM347.24 312.44h0.81v0.81h-0.81zM348.86 312.44h3.24v0.81h-3.24zM353.72 312.44h0.81v0.81h-0.81zM355.34 312.44h0.81v0.81h-0.81zM356.96 312.44h0.81v0.81h-0.81zM358.58 312.44h3.24v0.81h-3.24zM363.44 312.44h4.05v0.81h-4.05zM369.92 312.44h0.81v0.81h-0.81zM374.78 312.44h0.81v0.81h-0.81zM344.00 313.25h0.81v0.81h-0.81zM347.24 313.25h0.81v0.81h-0.81zM348.86 313.25h0.81v0.81h-0.81zM353.72 313.25h1.62v0.81h-1.62zM356.96 313.25h0.81v0.81h-0.81zM358.58 313.25h0.81v0.81h-0.81zM361.82 313.25h0.81v0.81h-0.81zM363.44 313.25h0.81v0.81h-0.81zM369.92 313.25h0.81v0.81h-0.81zM344.00 314.06h0.81v0.81h-0.81zM347.24 314.06h0.81v0.81h-0.81zM348.86 314.06h0.81v0.81h-0.81zM353.72 314.06h0.81v0.81h-0.81zM356.96 314.06h0.81v0.81h-0.81zM358.58 314.06h3.24v0.81h-3.24zM364.25 314.06h2.43v0.81h-2.43zM369.92 314.06h0.81v0.81h-0.81zM374.78 314.06h0.81v0.81h-0.81z" fill="#fff"/><path d="M344.00 317.60h8.10v1.62h-8.10zM405.56 317.60h1.62v1.62h-1.62zM344.00 319.22h1.62v1.62h-1.62zM350.48 319.22h1.62v1.62h-1.62zM405.56 319.22h1.62v1.62h-1.62zM344.00 320.84h1.62v1.62h-1.62zM350.48 320.84h1.62v1.62h-1.62zM353.72 320.84h6.48v1.62h-6.48zM363.44 320.84h1.62v1.62h-1.62zM369.92 320.84h1.62v1.62h-1.62zM373.16 320.84h6.48v1.62h-6.48zM384.50 320.84h4.86v1.62h-4.86zM392.60 320.84h8.10v1.62h-8.10zM405.56 320.84h1.62v1.62h-1.62zM344.00 322.46h1.62v1.62h-1.62zM350.48 322.46h1.62v1.62h-1.62zM353.72 322.46h1.62v1.62h-1.62zM360.20 322.46h1.62v1.62h-1.62zM363.44 322.46h1.62v1.62h-1.62zM368.30 322.46h3.24v1.62h-3.24zM373.16 322.46h1.62v1.62h-1.62zM379.64 322.46h1.62v1.62h-1.62zM382.88 322.46h1.62v1.62h-1.62zM389.36 322.46h1.62v1.62h-1.62zM395.84 322.46h1.62v1.62h-1.62zM405.56 322.46h1.62v1.62h-1.62zM344.00 324.08h1.62v1.62h-1.62zM350.48 324.08h1.62v1.62h-1.62zM353.72 324.08h6.48v1.62h-6.48zM363.44 324.08h1.62v1.62h-1.62zM366.68 324.08h1.62v1.62h-1.62zM369.92 324.08h1.62v1.62h-1.62zM373.16 324.08h6.48v1.62h-6.48zM382.88 324.08h8.10v1.62h-8.10zM395.84 324.08h1.62v1.62h-1.62zM405.56 324.08h1.62v1.62h-1.62zM344.00 325.70h1.62v1.62h-1.62zM350.48 325.70h1.62v1.62h-1.62zM353.72 325.70h1.62v1.62h-1.62zM363.44 325.70h3.24v1.62h-3.24zM369.92 325.70h1.62v1.62h-1.62zM373.16 325.70h1.62v1.62h-1.62zM379.64 325.70h1.62v1.62h-1.62zM382.88 325.70h1.62v1.62h-1.62zM395.84 325.70h1.62v1.62h-1.62zM344.00 327.32h1.62v1.62h-1.62zM350.48 327.32h1.62v1.62h-1.62zM353.72 327.32h1.62v1.62h-1.62zM363.44 327.32h1.62v1.62h-1.62zM369.92 327.32h1.62v1.62h-1.62zM373.16 327.32h6.48v1.62h-6.48zM384.50 327.32h4.86v1.62h-4.86zM395.84 327.32h1.62v1.62h-1.62zM405.56 327.32h1.62v1.62h-1.62z" fill="#fff"/><path d="M344.00 333.00h12.15v2.43h-12.15zM436.34 333.00h2.43v2.43h-2.43zM344.00 335.43h2.43v2.43h-2.43zM353.72 335.43h2.43v2.43h-2.43zM436.34 335.43h2.43v2.43h-2.43zM344.00 337.86h2.43v2.43h-2.43zM353.72 337.86h2.43v2.43h-2.43zM358.58 337.86h9.72v2.43h-9.72zM373.16 337.86h2.43v2.43h-2.43zM382.88 337.86h2.43v2.43h-2.43zM387.74 337.86h9.72v2.43h-9.72zM404.75 337.86h7.29v2.43h-7.29zM416.90 337.86h12.15v2.43h-12.15zM436.34 337.86h2.43v2.43h-2.43zM344.00 340.29h2.43v2.43h-2.43zM353.72 340.29h2.43v2.43h-2.43zM358.58 340.29h2.43v2.43h-2.43zM368.30 340.29h2.43v2.43h-2.43zM373.16 340.29h2.43v2.43h-2.43zM380.45 340.29h4.86v2.43h-4.86zM387.74 340.29h2.43v2.43h-2.43zM397.46 340.29h2.43v2.43h-2.43zM402.32 340.29h2.43v2.43h-2.43zM412.04 340.29h2.43v2.43h-2.43zM421.76 340.29h2.43v2.43h-2.43zM436.34 340.29h2.43v2.43h-2.43zM344.00 342.72h2.43v2.43h-2.43zM353.72 342.72h2.43v2.43h-2.43zM358.58 342.72h9.72v2.43h-9.72zM373.16 342.72h2.43v2.43h-2.43zM378.02 342.72h2.43v2.43h-2.43zM382.88 342.72h2.43v2.43h-2.43zM387.74 342.72h9.72v2.43h-9.72zM402.32 342.72h12.15v2.43h-12.15zM421.76 342.72h2.43v2.43h-2.43zM436.34 342.72h2.43v2.43h-2.43zM344.00 345.15h2.43v2.43h-2.43zM353.72 345.15h2.43v2.43h-2.43zM358.58 345.15h2.43v2.43h-2.43zM373.16 345.15h4.86v2.43h-4.86zM382.88 345.15h2.43v2.43h-2.43zM387.74 345.15h2.43v2.43h-2.43zM397.46 345.15h2.43v2.43h-2.43zM402.32 345.15h2.43v2.43h-2.43zM421.76 345.15h2.43v2.43h-2.43zM344.00 347.58h2.43v2.43h-2.43zM353.72 347.58h2.43v2.43h-2.43zM358.58 347.58h2.43v2.43h-2.43zM373.16 347.58h2.43v2.43h-2.43zM382.88 347.58h2.43v2.43h-2.43zM387.74 347.58h9.72v2.43h-9.72zM404.75 347.58h7.29v2.43h-7.29zM421.76 347.58h2.43v2.43h-2.43zM436.34 347.58h2.43v2.43h-2.43z" fill="#fff"/><text x="370.5" y="303.2" font-size="8.8" textLength="37.3" lengthAdjust="spacingAndGlyphs" font-family="Liberation Sans" fill="#28228e" stroke="#28228e" stroke-width="0.35">Ssd1306-9</text><path d="M357.3 375.3V382M363.6 375.3V382" stroke="#000" stroke-width="2.2"/><g font-family="Liberation Sans" font-size="5.6" fill="#b4bccc"><text transform="translate(359 374) rotate(-90)" textLength="9.2" lengthAdjust="spacingAndGlyphs">SCL</text><text transform="translate(365.3 374) rotate(-90)" textLength="9.2" lengthAdjust="spacingAndGlyphs">SDA</text></g><rect x="496.7" y="252.4" width="265.3" height="70.8" rx="2.5" fill="#33486a" stroke="#111" stroke-width="1"/><rect x="499.70" y="255.1" width="51.84" height="52.8" rx="2" fill="#000"/><rect x="551.54" y="255.1" width="51.84" height="52.8" rx="2" fill="#000"/><rect x="603.38" y="255.1" width="51.84" height="52.8" rx="2" fill="#000"/><rect x="655.22" y="255.1" width="51.84" height="52.8" rx="2" fill="#000"/><rect x="707.06" y="255.1" width="51.94" height="52.8" rx="2" fill="#000"/><g fill="#1e1e1e"><circle cx="503.20" cy="304.16" r="2.8"/><circle cx="509.68" cy="265.28" r="2.8"/><circle cx="509.68" cy="271.76" r="2.8"/><circle cx="509.68" cy="278.24" r="2.8"/><circle cx="509.68" cy="284.72" r="2.8"/><circle cx="509.68" cy="291.20" r="2.8"/><circle cx="509.68" cy="297.68" r="2.8"/><circle cx="509.68" cy="304.16" r="2.8"/><circle cx="516.16" cy="265.28" r="2.8"/><circle cx="516.16" cy="271.76" r="2.8"/><circle cx="516.16" cy="278.24" r="2.8"/><circle cx="516.16" cy="284.72" r="2.8"/><circle cx="516.16" cy="291.20" r="2.8"/><circle cx="516.16" cy="297.68" r="2.8"/><circle cx="516.16" cy="304.16" r="2.8"/><circle cx="522.64" cy="265.28" r="2.8"/><circle cx="522.64" cy="271.76" r="2.8"/><circle cx="522.64" cy="278.24" r="2.8"/><circle cx="522.64" cy="284.72" r="2.8"/><circle cx="522.64" cy="291.20" r="2.8"/><circle cx="522.64" cy="297.68" r="2.8"/><circle cx="522.64" cy="304.16" r="2.8"/><circle cx="529.12" cy="304.16" r="2.8"/><circle cx="535.60" cy="258.80" r="2.8"/><circle cx="535.60" cy="265.28" r="2.8"/><circle cx="535.60" cy="271.76" r="2.8"/><circle cx="535.60" cy="278.24" r="2.8"/><circle cx="535.60" cy="284.72" r="2.8"/><circle cx="535.60" cy="291.20" r="2.8"/><circle cx="535.60" cy="297.68" r="2.8"/><circle cx="535.60" cy="304.16" r="2.8"/><circle cx="542.08" cy="258.80" r="2.8"/><circle cx="542.08" cy="265.28" r="2.8"/><circle cx="542.08" cy="304.16" r="2.8"/><circle cx="548.56" cy="258.80" r="2.8"/><circle cx="548.56" cy="265.28" r="2.8"/><circle cx="548.56" cy="278.24" r="2.8"/><circle cx="548.56" cy="291.20" r="2.8"/><circle cx="548.56" cy="297.68" r="2.8"/><circle cx="548.56" cy="304.16" r="2.8"/><circle cx="555.04" cy="258.80" r="2.8"/><circle cx="555.04" cy="265.28" r="2.8"/><circle cx="555.04" cy="278.24" r="2.8"/><circle cx="555.04" cy="291.20" r="2.8"/><circle cx="555.04" cy="297.68" r="2.8"/><circle cx="555.04" cy="304.16" r="2.8"/><circle cx="561.52" cy="258.80" r="2.8"/><circle cx="561.52" cy="265.28" r="2.8"/><circle cx="561.52" cy="278.24" r="2.8"/><circle cx="561.52" cy="291.20" r="2.8"/><circle cx="561.52" cy="297.68" r="2.8"/><circle cx="561.52" cy="304.16" r="2.8"/><circle cx="568.00" cy="258.80" r="2.8"/><circle cx="568.00" cy="265.28" r="2.8"/><circle cx="568.00" cy="271.76" r="2.8"/><circle cx="568.00" cy="284.72" r="2.8"/><circle cx="568.00" cy="291.20" r="2.8"/><circle cx="568.00" cy="297.68" r="2.8"/><circle cx="568.00" cy="304.16" r="2.8"/><circle cx="574.48" cy="258.80" r="2.8"/><circle cx="574.48" cy="265.28" r="2.8"/><circle cx="574.48" cy="271.76" r="2.8"/><circle cx="574.48" cy="278.24" r="2.8"/><circle cx="574.48" cy="284.72" r="2.8"/><circle cx="574.48" cy="291.20" r="2.8"/><circle cx="574.48" cy="297.68" r="2.8"/><circle cx="574.48" cy="304.16" r="2.8"/><circle cx="580.96" cy="258.80" r="2.8"/><circle cx="580.96" cy="265.28" r="2.8"/><circle cx="580.96" cy="304.16" r="2.8"/><circle cx="587.44" cy="258.80" r="2.8"/><circle cx="587.44" cy="265.28" r="2.8"/><circle cx="587.44" cy="271.76" r="2.8"/><circle cx="587.44" cy="278.24" r="2.8"/><circle cx="587.44" cy="284.72" r="2.8"/><circle cx="587.44" cy="297.68" r="2.8"/><circle cx="587.44" cy="304.16" r="2.8"/><circle cx="593.92" cy="258.80" r="2.8"/><circle cx="593.92" cy="265.28" r="2.8"/><circle cx="593.92" cy="271.76" r="2.8"/><circle cx="593.92" cy="278.24" r="2.8"/><circle cx="593.92" cy="291.20" r="2.8"/><circle cx="593.92" cy="297.68" r="2.8"/><circle cx="593.92" cy="304.16" r="2.8"/><circle cx="600.40" cy="258.80" r="2.8"/><circle cx="600.40" cy="265.28" r="2.8"/><circle cx="600.40" cy="271.76" r="2.8"/><circle cx="600.40" cy="284.72" r="2.8"/><circle cx="600.40" cy="291.20" r="2.8"/><circle cx="600.40" cy="297.68" r="2.8"/><circle cx="600.40" cy="304.16" r="2.8"/><circle cx="606.88" cy="258.80" r="2.8"/><circle cx="606.88" cy="265.28" r="2.8"/><circle cx="606.88" cy="304.16" r="2.8"/><circle cx="613.36" cy="258.80" r="2.8"/><circle cx="613.36" cy="265.28" r="2.8"/><circle cx="613.36" cy="271.76" r="2.8"/><circle cx="613.36" cy="278.24" r="2.8"/><circle cx="613.36" cy="284.72" r="2.8"/><circle cx="613.36" cy="291.20" r="2.8"/><circle cx="613.36" cy="297.68" r="2.8"/><circle cx="613.36" cy="304.16" r="2.8"/><circle cx="619.84" cy="258.80" r="2.8"/><circle cx="619.84" cy="265.28" r="2.8"/><circle cx="619.84" cy="304.16" r="2.8"/><circle cx="626.32" cy="258.80" r="2.8"/><circle cx="626.32" cy="265.28" r="2.8"/><circle cx="626.32" cy="278.24" r="2.8"/><circle cx="626.32" cy="291.20" r="2.8"/><circle cx="626.32" cy="304.16" r="2.8"/><circle cx="632.80" cy="258.80" r="2.8"/><circle cx="632.80" cy="265.28" r="2.8"/><circle cx="632.80" cy="278.24" r="2.8"/><circle cx="632.80" cy="291.20" r="2.8"/><circle cx="632.80" cy="304.16" r="2.8"/><circle cx="639.28" cy="258.80" r="2.8"/><circle cx="639.28" cy="265.28" r="2.8"/><circle cx="639.28" cy="278.24" r="2.8"/><circle cx="639.28" cy="291.20" r="2.8"/><circle cx="639.28" cy="304.16" r="2.8"/><circle cx="645.76" cy="258.80" r="2.8"/><circle cx="645.76" cy="265.28" r="2.8"/><circle cx="645.76" cy="271.76" r="2.8"/><circle cx="645.76" cy="284.72" r="2.8"/><circle cx="645.76" cy="297.68" r="2.8"/><circle cx="645.76" cy="304.16" r="2.8"/><circle cx="652.24" cy="258.80" r="2.8"/><circle cx="652.24" cy="265.28" r="2.8"/><circle cx="652.24" cy="271.76" r="2.8"/><circle cx="652.24" cy="278.24" r="2.8"/><circle cx="652.24" cy="284.72" r="2.8"/><circle cx="652.24" cy="291.20" r="2.8"/><circle cx="652.24" cy="297.68" r="2.8"/><circle cx="652.24" cy="304.16" r="2.8"/><circle cx="658.72" cy="258.80" r="2.8"/><circle cx="658.72" cy="265.28" r="2.8"/><circle cx="658.72" cy="271.76" r="2.8"/><circle cx="658.72" cy="297.68" r="2.8"/><circle cx="658.72" cy="304.16" r="2.8"/><circle cx="665.20" cy="258.80" r="2.8"/><circle cx="665.20" cy="265.28" r="2.8"/><circle cx="665.20" cy="278.24" r="2.8"/><circle cx="665.20" cy="291.20" r="2.8"/><circle cx="665.20" cy="304.16" r="2.8"/><circle cx="671.68" cy="258.80" r="2.8"/><circle cx="671.68" cy="265.28" r="2.8"/><circle cx="671.68" cy="278.24" r="2.8"/><circle cx="671.68" cy="291.20" r="2.8"/><circle cx="671.68" cy="304.16" r="2.8"/><circle cx="678.16" cy="258.80" r="2.8"/><circle cx="678.16" cy="265.28" r="2.8"/><circle cx="678.16" cy="278.24" r="2.8"/><circle cx="678.16" cy="291.20" r="2.8"/><circle cx="678.16" cy="304.16" r="2.8"/><circle cx="684.64" cy="258.80" r="2.8"/><circle cx="684.64" cy="265.28" r="2.8"/><circle cx="684.64" cy="271.76" r="2.8"/><circle cx="684.64" cy="291.20" r="2.8"/><circle cx="684.64" cy="297.68" r="2.8"/><circle cx="684.64" cy="304.16" r="2.8"/><circle cx="691.12" cy="258.80" r="2.8"/><circle cx="691.12" cy="265.28" r="2.8"/><circle cx="691.12" cy="271.76" r="2.8"/><circle cx="691.12" cy="278.24" r="2.8"/><circle cx="691.12" cy="284.72" r="2.8"/><circle cx="691.12" cy="291.20" r="2.8"/><circle cx="691.12" cy="297.68" r="2.8"/><circle cx="691.12" cy="304.16" r="2.8"/><circle cx="697.60" cy="258.80" r="2.8"/><circle cx="697.60" cy="265.28" r="2.8"/><circle cx="697.60" cy="278.24" r="2.8"/><circle cx="697.60" cy="284.72" r="2.8"/><circle cx="697.60" cy="291.20" r="2.8"/><circle cx="697.60" cy="297.68" r="2.8"/><circle cx="697.60" cy="304.16" r="2.8"/><circle cx="704.08" cy="258.80" r="2.8"/><circle cx="704.08" cy="265.28" r="2.8"/><circle cx="704.08" cy="278.24" r="2.8"/><circle cx="704.08" cy="284.72" r="2.8"/><circle cx="704.08" cy="291.20" r="2.8"/><circle cx="704.08" cy="297.68" r="2.8"/><circle cx="704.08" cy="304.16" r="2.8"/><circle cx="710.56" cy="258.80" r="2.8"/><circle cx="710.56" cy="265.28" r="2.8"/><circle cx="710.56" cy="304.16" r="2.8"/><circle cx="717.04" cy="258.80" r="2.8"/><circle cx="717.04" cy="265.28" r="2.8"/><circle cx="717.04" cy="278.24" r="2.8"/><circle cx="717.04" cy="284.72" r="2.8"/><circle cx="717.04" cy="291.20" r="2.8"/><circle cx="717.04" cy="297.68" r="2.8"/><circle cx="717.04" cy="304.16" r="2.8"/><circle cx="723.52" cy="258.80" r="2.8"/><circle cx="723.52" cy="265.28" r="2.8"/><circle cx="723.52" cy="278.24" r="2.8"/><circle cx="723.52" cy="284.72" r="2.8"/><circle cx="723.52" cy="291.20" r="2.8"/><circle cx="723.52" cy="297.68" r="2.8"/><circle cx="723.52" cy="304.16" r="2.8"/><circle cx="730.00" cy="258.80" r="2.8"/><circle cx="730.00" cy="265.28" r="2.8"/><circle cx="730.00" cy="271.76" r="2.8"/><circle cx="730.00" cy="278.24" r="2.8"/><circle cx="730.00" cy="284.72" r="2.8"/><circle cx="730.00" cy="291.20" r="2.8"/><circle cx="730.00" cy="297.68" r="2.8"/><circle cx="730.00" cy="304.16" r="2.8"/><circle cx="736.48" cy="258.80" r="2.8"/><circle cx="736.48" cy="265.28" r="2.8"/><circle cx="736.48" cy="271.76" r="2.8"/><circle cx="736.48" cy="278.24" r="2.8"/><circle cx="736.48" cy="284.72" r="2.8"/><circle cx="736.48" cy="291.20" r="2.8"/><circle cx="736.48" cy="297.68" r="2.8"/><circle cx="736.48" cy="304.16" r="2.8"/><circle cx="742.96" cy="258.80" r="2.8"/><circle cx="742.96" cy="265.28" r="2.8"/><circle cx="742.96" cy="271.76" r="2.8"/><circle cx="742.96" cy="278.24" r="2.8"/><circle cx="742.96" cy="284.72" r="2.8"/><circle cx="742.96" cy="291.20" r="2.8"/><circle cx="742.96" cy="297.68" r="2.8"/><circle cx="742.96" cy="304.16" r="2.8"/><circle cx="749.44" cy="291.20" r="2.8"/><circle cx="749.44" cy="304.16" r="2.8"/><circle cx="755.92" cy="258.80" r="2.8"/><circle cx="755.92" cy="265.28" r="2.8"/><circle cx="755.92" cy="271.76" r="2.8"/><circle cx="755.92" cy="278.24" r="2.8"/><circle cx="755.92" cy="284.72" r="2.8"/><circle cx="755.92" cy="291.20" r="2.8"/><circle cx="755.92" cy="297.68" r="2.8"/><circle cx="755.92" cy="304.16" r="2.8"/></g><g fill="#9a9a22"><circle cx="503.20" cy="258.80" r="2.8"/><circle cx="503.20" cy="265.28" r="2.8"/><circle cx="503.20" cy="271.76" r="2.8"/><circle cx="503.20" cy="278.24" r="2.8"/><circle cx="503.20" cy="284.72" r="2.8"/><circle cx="503.20" cy="291.20" r="2.8"/><circle cx="503.20" cy="297.68" r="2.8"/><circle cx="509.68" cy="258.80" r="2.8"/><circle cx="516.16" cy="258.80" r="2.8"/><circle cx="522.64" cy="258.80" r="2.8"/><circle cx="529.12" cy="258.80" r="2.8"/><circle cx="529.12" cy="265.28" r="2.8"/><circle cx="529.12" cy="271.76" r="2.8"/><circle cx="529.12" cy="278.24" r="2.8"/><circle cx="529.12" cy="284.72" r="2.8"/><circle cx="529.12" cy="291.20" r="2.8"/><circle cx="529.12" cy="297.68" r="2.8"/><circle cx="542.08" cy="271.76" r="2.8"/><circle cx="542.08" cy="278.24" r="2.8"/><circle cx="542.08" cy="284.72" r="2.8"/><circle cx="542.08" cy="291.20" r="2.8"/><circle cx="542.08" cy="297.68" r="2.8"/><circle cx="548.56" cy="271.76" r="2.8"/><circle cx="548.56" cy="284.72" r="2.8"/><circle cx="555.04" cy="271.76" r="2.8"/><circle cx="555.04" cy="284.72" r="2.8"/><circle cx="561.52" cy="271.76" r="2.8"/><circle cx="561.52" cy="284.72" r="2.8"/><circle cx="568.00" cy="278.24" r="2.8"/><circle cx="580.96" cy="271.76" r="2.8"/><circle cx="580.96" cy="278.24" r="2.8"/><circle cx="580.96" cy="284.72" r="2.8"/><circle cx="580.96" cy="291.20" r="2.8"/><circle cx="580.96" cy="297.68" r="2.8"/><circle cx="587.44" cy="291.20" r="2.8"/><circle cx="593.92" cy="284.72" r="2.8"/><circle cx="600.40" cy="278.24" r="2.8"/><circle cx="606.88" cy="271.76" r="2.8"/><circle cx="606.88" cy="278.24" r="2.8"/><circle cx="606.88" cy="284.72" r="2.8"/><circle cx="606.88" cy="291.20" r="2.8"/><circle cx="606.88" cy="297.68" r="2.8"/><circle cx="619.84" cy="271.76" r="2.8"/><circle cx="619.84" cy="278.24" r="2.8"/><circle cx="619.84" cy="284.72" r="2.8"/><circle cx="619.84" cy="291.20" r="2.8"/><circle cx="619.84" cy="297.68" r="2.8"/><circle cx="626.32" cy="271.76" r="2.8"/><circle cx="626.32" cy="284.72" r="2.8"/><circle cx="626.32" cy="297.68" r="2.8"/><circle cx="632.80" cy="271.76" r="2.8"/><circle cx="632.80" cy="284.72" r="2.8"/><circle cx="632.80" cy="297.68" r="2.8"/><circle cx="639.28" cy="271.76" r="2.8"/><circle cx="639.28" cy="284.72" r="2.8"/><circle cx="639.28" cy="297.68" r="2.8"/><circle cx="645.76" cy="278.24" r="2.8"/><circle cx="645.76" cy="291.20" r="2.8"/><circle cx="658.72" cy="278.24" r="2.8"/><circle cx="658.72" cy="284.72" r="2.8"/><circle cx="658.72" cy="291.20" r="2.8"/><circle cx="665.20" cy="271.76" r="2.8"/><circle cx="665.20" cy="284.72" r="2.8"/><circle cx="665.20" cy="297.68" r="2.8"/><circle cx="671.68" cy="271.76" r="2.8"/><circle cx="671.68" cy="284.72" r="2.8"/><circle cx="671.68" cy="297.68" r="2.8"/><circle cx="678.16" cy="271.76" r="2.8"/><circle cx="678.16" cy="284.72" r="2.8"/><circle cx="678.16" cy="297.68" r="2.8"/><circle cx="684.64" cy="278.24" r="2.8"/><circle cx="684.64" cy="284.72" r="2.8"/><circle cx="697.60" cy="271.76" r="2.8"/><circle cx="704.08" cy="271.76" r="2.8"/><circle cx="710.56" cy="271.76" r="2.8"/><circle cx="710.56" cy="278.24" r="2.8"/><circle cx="710.56" cy="284.72" r="2.8"/><circle cx="710.56" cy="291.20" r="2.8"/><circle cx="710.56" cy="297.68" r="2.8"/><circle cx="717.04" cy="271.76" r="2.8"/><circle cx="723.52" cy="271.76" r="2.8"/><circle cx="749.44" cy="258.80" r="2.8"/><circle cx="749.44" cy="265.28" r="2.8"/><circle cx="749.44" cy="271.76" r="2.8"/><circle cx="749.44" cy="278.24" r="2.8"/><circle cx="749.44" cy="284.72" r="2.8"/><circle cx="749.44" cy="297.68" r="2.8"/></g><text x="500" y="249.6" font-size="8.8" textLength="67" lengthAdjust="spacingAndGlyphs" font-family="Liberation Sans" fill="#28228e" stroke="#28228e" stroke-width="0.35">Max72xx_matrix-6</text><path d="M503 323V330M509.5 323V330M515.9 323V330" stroke="#000" stroke-width="2.2"/><g font-family="Liberation Sans" font-size="5.6" fill="#b4bccc"><text transform="translate(504.8 321.5) rotate(-90)" textLength="9.2" lengthAdjust="spacingAndGlyphs">SCK</text><text transform="translate(511.3 321.5) rotate(-90)" textLength="9.2" lengthAdjust="spacingAndGlyphs">DIN</text><text transform="translate(517.7 321.5) rotate(-90)" textLength="6.0" lengthAdjust="spacingAndGlyphs">CS</text></g><text x="493.8" y="351.6" font-size="8.8" textLength="26.2" lengthAdjust="spacingAndGlyphs" font-family="Liberation Sans" fill="#28228e" stroke="#28228e" stroke-width="0.35">Mega-1</text><path d="M497 366.5H524.5L530.5 360.2H614.5L621.6 366.2V604.2H494.5V369Z" fill="#2d2d8e"/><rect x="496.8" y="369.1" width="115.2" height="11.6" fill="#3a3a3a"/><rect x="496.8" y="394.6" width="5.8" height="52.1" fill="#3a3a3a"/><rect x="496.8" y="452.8" width="5.8" height="52.1" fill="#3a3a3a"/><rect x="496.8" y="510.7" width="5.8" height="52.1" fill="#3a3a3a"/><rect x="613.8" y="387.6" width="5.8" height="52.1" fill="#3a3a3a"/><rect x="613.8" y="445.9" width="5.8" height="52.1" fill="#3a3a3a"/><rect x="613.8" y="504.5" width="5.8" height="39.2" fill="#3a3a3a"/><g fill="#000"><circle cx="499.50" cy="371.6" r="1.75"/><circle cx="499.50" cy="378.4" r="1.75"/><circle cx="505.98" cy="371.6" r="1.75"/><circle cx="505.98" cy="378.4" r="1.75"/><circle cx="512.46" cy="371.6" r="1.75"/><circle cx="512.46" cy="378.4" r="1.75"/><circle cx="518.93" cy="371.6" r="1.75"/><circle cx="518.93" cy="378.4" r="1.75"/><circle cx="525.41" cy="371.6" r="1.75"/><circle cx="525.41" cy="378.4" r="1.75"/><circle cx="531.89" cy="371.6" r="1.75"/><circle cx="531.89" cy="378.4" r="1.75"/><circle cx="538.37" cy="371.6" r="1.75"/><circle cx="538.37" cy="378.4" r="1.75"/><circle cx="544.85" cy="371.6" r="1.75"/><circle cx="544.85" cy="378.4" r="1.75"/><circle cx="551.32" cy="371.6" r="1.75"/><circle cx="551.32" cy="378.4" r="1.75"/><circle cx="557.80" cy="371.6" r="1.75"/><circle cx="557.80" cy="378.4" r="1.75"/><circle cx="564.28" cy="371.6" r="1.75"/><circle cx="564.28" cy="378.4" r="1.75"/><circle cx="570.76" cy="371.6" r="1.75"/><circle cx="570.76" cy="378.4" r="1.75"/><circle cx="577.24" cy="371.6" r="1.75"/><circle cx="577.24" cy="378.4" r="1.75"/><circle cx="583.71" cy="371.6" r="1.75"/><circle cx="583.71" cy="378.4" r="1.75"/><circle cx="590.19" cy="371.6" r="1.75"/><circle cx="590.19" cy="378.4" r="1.75"/><circle cx="596.67" cy="371.6" r="1.75"/><circle cx="596.67" cy="378.4" r="1.75"/><circle cx="603.15" cy="371.6" r="1.75"/><circle cx="603.15" cy="378.4" r="1.75"/><circle cx="609.63" cy="371.6" r="1.75"/><circle cx="609.63" cy="378.4" r="1.75"/><circle cx="499.7" cy="398.00" r="1.75"/><circle cx="499.7" cy="404.48" r="1.75"/><circle cx="499.7" cy="410.96" r="1.75"/><circle cx="499.7" cy="417.43" r="1.75"/><circle cx="499.7" cy="423.91" r="1.75"/><circle cx="499.7" cy="430.39" r="1.75"/><circle cx="499.7" cy="436.87" r="1.75"/><circle cx="499.7" cy="443.35" r="1.75"/><circle cx="499.7" cy="456.20" r="1.75"/><circle cx="499.7" cy="462.68" r="1.75"/><circle cx="499.7" cy="469.16" r="1.75"/><circle cx="499.7" cy="475.63" r="1.75"/><circle cx="499.7" cy="482.11" r="1.75"/><circle cx="499.7" cy="488.59" r="1.75"/><circle cx="499.7" cy="495.07" r="1.75"/><circle cx="499.7" cy="501.55" r="1.75"/><circle cx="499.7" cy="514.10" r="1.75"/><circle cx="499.7" cy="520.58" r="1.75"/><circle cx="499.7" cy="527.06" r="1.75"/><circle cx="499.7" cy="533.53" r="1.75"/><circle cx="499.7" cy="540.01" r="1.75"/><circle cx="499.7" cy="546.49" r="1.75"/><circle cx="499.7" cy="552.97" r="1.75"/><circle cx="499.7" cy="559.45" r="1.75"/><circle cx="616.7" cy="391.00" r="1.75"/><circle cx="616.7" cy="397.48" r="1.75"/><circle cx="616.7" cy="403.96" r="1.75"/><circle cx="616.7" cy="410.43" r="1.75"/><circle cx="616.7" cy="416.91" r="1.75"/><circle cx="616.7" cy="423.39" r="1.75"/><circle cx="616.7" cy="429.87" r="1.75"/><circle cx="616.7" cy="436.35" r="1.75"/><circle cx="616.7" cy="449.30" r="1.75"/><circle cx="616.7" cy="455.78" r="1.75"/><circle cx="616.7" cy="462.26" r="1.75"/><circle cx="616.7" cy="468.73" r="1.75"/><circle cx="616.7" cy="475.21" r="1.75"/><circle cx="616.7" cy="481.69" r="1.75"/><circle cx="616.7" cy="488.17" r="1.75"/><circle cx="616.7" cy="494.65" r="1.75"/><circle cx="616.7" cy="507.90" r="1.75"/><circle cx="616.7" cy="514.38" r="1.75"/><circle cx="616.7" cy="520.86" r="1.75"/><circle cx="616.7" cy="527.33" r="1.75"/><circle cx="616.7" cy="533.81" r="1.75"/><circle cx="616.7" cy="540.29" r="1.75"/></g><g fill="#fff"><circle cx="616.4" cy="371.3" r="3.9"/><circle cx="499.7" cy="387" r="3.9"/><circle cx="499.8" cy="568.5" r="3.9"/><circle cx="616" cy="566.2" r="3.9"/></g><g font-family="Liberation Mono" font-size="5.6" letter-spacing="-0.35" fill="#dcd6ee"><text x="502.6" y="400.0">21&#160;SCL</text><text x="502.6" y="406.5">20&#160;SDA</text><text x="502.6" y="413.0">19&#160;RX1</text><text x="502.6" y="419.4">18&#160;TX1</text><text x="502.6" y="425.9">17&#160;RX2</text><text x="502.6" y="432.4">16&#160;TX2</text><text x="502.6" y="438.9">15&#160;RX3</text><text x="502.6" y="445.3">14&#160;TX3</text><text x="502.6" y="458.2">0&#160;RX0</text><text x="502.6" y="464.7">1&#160;TX0</text><text x="502.6" y="471.2">2&#160;PWM</text><text x="502.6" y="477.6">3&#160;PWM</text><text x="502.6" y="484.1">4&#160;PWM</text><text x="502.6" y="490.6">5&#160;PWM</text><text x="502.6" y="497.1">6&#160;PWM</text><text x="502.6" y="503.5">7&#160;PWM</text><text x="502.6" y="516.1">8&#160;PWM</text><text x="502.6" y="522.6">9&#160;PWM</text><text x="502.6" y="529.1">10&#160;PWM</text><text x="502.6" y="535.5">11&#160;PWM</text><text x="502.6" y="542.0">12&#160;PWM</text><text x="502.6" y="548.5">13&#160;PWM</text><text x="502.6" y="555.0">GND</text><text x="502.6" y="561.4">Aref</text><text x="613" y="393.0" text-anchor="end">A15</text><text x="613" y="399.5" text-anchor="end">A14</text><text x="613" y="406.0" text-anchor="end">A13</text><text x="613" y="412.4" text-anchor="end">A12</text><text x="613" y="418.9" text-anchor="end">A11</text><text x="613" y="425.4" text-anchor="end">A10</text><text x="613" y="431.9" text-anchor="end">A9</text><text x="613" y="438.3" text-anchor="end">A8</text><text x="613" y="451.3" text-anchor="end">A7</text><text x="613" y="457.8" text-anchor="end">A6</text><text x="613" y="464.3" text-anchor="end">A5</text><text x="613" y="470.7" text-anchor="end">A4</text><text x="613" y="477.2" text-anchor="end">A3</text><text x="613" y="483.7" text-anchor="end">A2</text><text x="613" y="490.2" text-anchor="end">A1</text><text x="613" y="496.6" text-anchor="end">A0</text><text x="613" y="509.9" text-anchor="end">Vin</text><text x="613" y="516.4" text-anchor="end">GND</text><text x="613" y="522.9" text-anchor="end">GND</text><text x="613" y="529.3" text-anchor="end">5V</text><text x="613" y="535.8" text-anchor="end">3V3</text><text x="613" y="542.3" text-anchor="end">RST</text><text transform="translate(501.3 389.5) rotate(-90)">22</text><text transform="translate(507.8 389.5) rotate(-90)">24</text><text transform="translate(514.3 389.5) rotate(-90)">26</text><text transform="translate(520.7 389.5) rotate(-90)">28</text><text transform="translate(527.2 389.5) rotate(-90)">30</text><text transform="translate(533.7 368) rotate(-90)">31</text><text transform="translate(533.7 389.5) rotate(-90)">32</text><text transform="translate(540.2 368) rotate(-90)">33</text><text transform="translate(540.2 389.5) rotate(-90)">34</text><text transform="translate(546.6 368) rotate(-90)">35</text><text transform="translate(546.6 389.5) rotate(-90)">36</text><text transform="translate(553.1 368) rotate(-90)">37</text><text transform="translate(553.1 389.5) rotate(-90)">38</text><text transform="translate(559.6 368) rotate(-90)">39</text><text transform="translate(559.6 389.5) rotate(-90)">40</text><text transform="translate(566.1 368) rotate(-90)">41</text><text transform="translate(566.1 389.5) rotate(-90)">42</text><text transform="translate(572.6 368) rotate(-90)">43</text><text transform="translate(572.6 389.5) rotate(-90)">44</text><text transform="translate(579.0 368) rotate(-90)">45</text><text transform="translate(579.0 389.5) rotate(-90)">46</text><text transform="translate(585.5 368) rotate(-90)">47</text><text transform="translate(585.5 389.5) rotate(-90)">48</text><text transform="translate(592.0 368) rotate(-90)">49</text><text transform="translate(592.0 389.5) rotate(-90)">50</text><text transform="translate(598.5 368) rotate(-90)">51</text><text transform="translate(598.5 389.5) rotate(-90)">52</text><text transform="translate(604.9 368) rotate(-90)">53</text><text transform="translate(604.9 389.5) rotate(-90)">54</text></g><rect x="529.4" y="544.1" width="6.3" height="6.3" rx="1" fill="#000"/><rect x="515.2" y="584.3" width="29.2" height="33.5" fill="#6f6f6f"/><rect x="515.2" y="584.3" width="29.2" height="1.2" fill="#9a9a9a"/><rect x="592.4" y="578" width="21.3" height="32.3" fill="#000"/><rect x="289.3" y="430.8" width="58.6" height="25.8" rx="3.5" fill="#00007f" stroke="#111" stroke-width="1"/><rect x="293" y="436" width="34.6" height="15.2" rx="2" fill="url(#btn)" stroke="#8a8a8a" stroke-width="0.8"/><svg x="293" y="436" width="34.6" height="15.2"><text x="17.3" y="11.6" font-family="Liberation Sans" font-size="10.8" text-anchor="middle" fill="#222">Открыть</text></svg><ellipse cx="335.4" cy="436.8" rx="3.4" ry="2.7" fill="#000"/><ellipse cx="335.4" cy="449.6" rx="3.4" ry="2.7" fill="#000"/><g font-family="Liberation Sans" font-size="6" fill="#9fb2ee"><text x="340" y="439">Tx</text><text x="340" y="451.8">Rx</text></g><path d="M347.9 436.8H355M347.9 449.6H355" stroke="#000" stroke-width="2.2"/><rect x="218.3" y="463" width="129.6" height="25.5" rx="3.5" fill="#00007f" stroke="#111" stroke-width="1"/><rect x="289.9" y="468.6" width="34.6" height="15" rx="2" fill="url(#btn)" stroke="#8a8a8a" stroke-width="0.8"/><text x="307.2" y="481" font-family="Liberation Sans" font-size="11.2" text-anchor="middle" fill="#222">Open</text><rect x="331.8" y="467.4" width="7.2" height="4.6" rx="1.5" fill="#e00000" stroke="#000" stroke-width="0.8"/><rect x="331.8" y="480.2" width="7.2" height="4.6" rx="1.5" fill="#e00000" stroke="#000" stroke-width="0.8"/><g font-family="Liberation Sans" font-size="6" fill="#9fb2ee"><text x="340" y="471.6">Tx</text><text x="340" y="484.4">Rx</text></g><path d="M347.9 469.4H355M347.9 482.2H355" stroke="#000" stroke-width="2.2"/><text x="310.6" y="533.2" font-size="8.8" textLength="27" lengthAdjust="spacingAndGlyphs" font-family="Liberation Sans" fill="#28228e" stroke="#28228e" stroke-width="0.35">Servo-3</text><rect x="292.6" y="537.7" width="65" height="38.5" rx="3" fill="#34486a" stroke="#111" stroke-width="1"/><circle cx="312.6" cy="557" r="12" fill="none" stroke="#fff" stroke-width="1.3"/><rect x="279.5" y="550.3" width="39.2" height="13.3" rx="6.6" fill="#fff" stroke="#111" stroke-width="1"/><g font-family="Liberation Sans" font-size="6" fill="#c8d0e0" text-anchor="end"><text x="355" y="546.4">V+</text><text x="355" y="559.2">Gnd</text><text x="355" y="572">SIg</text></g><path d="M357.6 544.3H364M357.6 557.1H364M357.6 570H364" stroke="#000" stroke-width="2.2"/><rect x="629.5" y="404.6" width="32.5" height="45.5" rx="3" fill="#ebebeb" stroke="#111" stroke-width="1.2"/><path d="M637.60 429.20L635.48 431.32M636.15 427.44L633.66 429.11M635.08 425.44L632.31 426.59M634.42 423.26L631.48 423.85M634.20 421.00L631.20 421.00M634.42 418.74L631.48 418.15M635.08 416.56L632.31 415.41M636.15 414.56L633.66 412.89M637.60 412.80L635.48 410.68M639.36 411.35L637.69 408.86M641.36 410.28L640.21 407.51M643.54 409.62L642.95 406.68M645.80 409.40L645.80 406.40M648.06 409.62L648.65 406.68M650.24 410.28L651.39 407.51M652.24 411.35L653.91 408.86M654.00 412.80L656.12 410.68M655.45 414.56L657.94 412.89M656.52 416.56L659.29 415.41M657.18 418.74L660.12 418.15M657.40 421.00L660.40 421.00M657.18 423.26L660.12 423.85M656.52 425.44L659.29 426.59M655.45 427.44L657.94 429.11M654.00 429.20L656.12 431.32" stroke="#4a4a4a" stroke-width="0.75"/><circle cx="645.8" cy="421" r="10.8" fill="url(#knob)" stroke="#aaa" stroke-width="0.5"/><circle cx="642.2" cy="416.3" r="1.8" fill="#ccc" stroke="#999" stroke-width="0.5"/><path d="M639.6 431.4L637.9 434.6" stroke="#e03030" stroke-width="0.9"/><rect x="633.2" y="435.4" width="25.7" height="12.3" rx="2" fill="#d6d6d6" stroke="#9a9a9a" stroke-width="0.8"/><text x="646" y="444.2" font-family="Liberation Sans" font-weight="bold" font-size="7" text-anchor="middle" fill="#3a3a4a">1.87 V</text><text x="643.4" y="458.4" font-family="Liberation Sans" font-size="7.2" text-anchor="middle" fill="#c03a2a">5 V</text><path d="M662 439.8H669" stroke="#000" stroke-width="2.2"/><path d="M681.5 430.4H688" stroke="#000" stroke-width="2.2"/><rect x="687.5" y="424" width="136.7" height="58.5" rx="2" fill="#2c2c8c" stroke="#111" stroke-width="1"/><circle cx="720.6" cy="453.3" r="24" fill="#9fb3c2"/><circle cx="720.6" cy="453.3" r="20.3" fill="#000"/><g fill="#d8dde8"><rect x="706.00" y="449.90" width="1.2" height="1.2"/><rect x="706.00" y="452.70" width="1.2" height="1.2"/><rect x="706.00" y="455.50" width="1.2" height="1.2"/><rect x="708.80" y="444.30" width="1.2" height="1.2"/><rect x="708.80" y="447.10" width="1.2" height="1.2"/><rect x="708.80" y="449.90" width="1.2" height="1.2"/><rect x="708.80" y="452.70" width="1.2" height="1.2"/><rect x="708.80" y="455.50" width="1.2" height="1.2"/><rect x="708.80" y="458.30" width="1.2" height="1.2"/><rect x="708.80" y="461.10" width="1.2" height="1.2"/><rect x="711.60" y="441.50" width="1.2" height="1.2"/><rect x="711.60" y="444.30" width="1.2" height="1.2"/><rect x="711.60" y="447.10" width="1.2" height="1.2"/><rect x="711.60" y="449.90" width="1.2" height="1.2"/><rect x="711.60" y="452.70" width="1.2" height="1.2"/><rect x="711.60" y="455.50" width="1.2" height="1.2"/><rect x="711.60" y="458.30" width="1.2" height="1.2"/><rect x="711.60" y="461.10" width="1.2" height="1.2"/><rect x="711.60" y="463.90" width="1.2" height="1.2"/><rect x="714.40" y="441.50" width="1.2" height="1.2"/><rect x="714.40" y="444.30" width="1.2" height="1.2"/><rect x="714.40" y="447.10" width="1.2" height="1.2"/><rect x="714.40" y="449.90" width="1.2" height="1.2"/><rect x="714.40" y="452.70" width="1.2" height="1.2"/><rect x="714.40" y="455.50" width="1.2" height="1.2"/><rect x="714.40" y="458.30" width="1.2" height="1.2"/><rect x="714.40" y="461.10" width="1.2" height="1.2"/><rect x="714.40" y="463.90" width="1.2" height="1.2"/><rect x="717.20" y="438.70" width="1.2" height="1.2"/><rect x="717.20" y="441.50" width="1.2" height="1.2"/><rect x="717.20" y="444.30" width="1.2" height="1.2"/><rect x="717.20" y="447.10" width="1.2" height="1.2"/><rect x="717.20" y="449.90" width="1.2" height="1.2"/><rect x="717.20" y="452.70" width="1.2" height="1.2"/><rect x="717.20" y="455.50" width="1.2" height="1.2"/><rect x="717.20" y="458.30" width="1.2" height="1.2"/><rect x="717.20" y="461.10" width="1.2" height="1.2"/><rect x="717.20" y="463.90" width="1.2" height="1.2"/><rect x="717.20" y="466.70" width="1.2" height="1.2"/><rect x="720.00" y="438.70" width="1.2" height="1.2"/><rect x="720.00" y="441.50" width="1.2" height="1.2"/><rect x="720.00" y="444.30" width="1.2" height="1.2"/><rect x="720.00" y="447.10" width="1.2" height="1.2"/><rect x="720.00" y="449.90" width="1.2" height="1.2"/><rect x="720.00" y="452.70" width="1.2" height="1.2"/><rect x="720.00" y="455.50" width="1.2" height="1.2"/><rect x="720.00" y="458.30" width="1.2" height="1.2"/><rect x="720.00" y="461.10" width="1.2" height="1.2"/><rect x="720.00" y="463.90" width="1.2" height="1.2"/><rect x="720.00" y="466.70" width="1.2" height="1.2"/><rect x="722.80" y="438.70" width="1.2" height="1.2"/><rect x="722.80" y="441.50" width="1.2" height="1.2"/><rect x="722.80" y="444.30" width="1.2" height="1.2"/><rect x="722.80" y="447.10" width="1.2" height="1.2"/><rect x="722.80" y="449.90" width="1.2" height="1.2"/><rect x="722.80" y="452.70" width="1.2" height="1.2"/><rect x="722.80" y="455.50" width="1.2" height="1.2"/><rect x="722.80" y="458.30" width="1.2" height="1.2"/><rect x="722.80" y="461.10" width="1.2" height="1.2"/><rect x="722.80" y="463.90" width="1.2" height="1.2"/><rect x="722.80" y="466.70" width="1.2" height="1.2"/><rect x="725.60" y="441.50" width="1.2" height="1.2"/><rect x="725.60" y="444.30" width="1.2" height="1.2"/><rect x="725.60" y="447.10" width="1.2" height="1.2"/><rect x="725.60" y="449.90" width="1.2" height="1.2"/><rect x="725.60" y="452.70" width="1.2" height="1.2"/><rect x="725.60" y="455.50" width="1.2" height="1.2"/><rect x="725.60" y="458.30" width="1.2" height="1.2"/><rect x="725.60" y="461.10" width="1.2" height="1.2"/><rect x="725.60" y="463.90" width="1.2" height="1.2"/><rect x="728.40" y="441.50" width="1.2" height="1.2"/><rect x="728.40" y="444.30" width="1.2" height="1.2"/><rect x="728.40" y="447.10" width="1.2" height="1.2"/><rect x="728.40" y="449.90" width="1.2" height="1.2"/><rect x="728.40" y="452.70" width="1.2" height="1.2"/><rect x="728.40" y="455.50" width="1.2" height="1.2"/><rect x="728.40" y="458.30" width="1.2" height="1.2"/><rect x="728.40" y="461.10" width="1.2" height="1.2"/><rect x="728.40" y="463.90" width="1.2" height="1.2"/><rect x="731.20" y="444.30" width="1.2" height="1.2"/><rect x="731.20" y="447.10" width="1.2" height="1.2"/><rect x="731.20" y="449.90" width="1.2" height="1.2"/><rect x="731.20" y="452.70" width="1.2" height="1.2"/><rect x="731.20" y="455.50" width="1.2" height="1.2"/><rect x="731.20" y="458.30" width="1.2" height="1.2"/><rect x="731.20" y="461.10" width="1.2" height="1.2"/><rect x="734.00" y="449.90" width="1.2" height="1.2"/><rect x="734.00" y="452.70" width="1.2" height="1.2"/><rect x="734.00" y="455.50" width="1.2" height="1.2"/></g><circle cx="791" cy="453.3" r="24" fill="#9fb3c2"/><circle cx="791" cy="453.3" r="20.3" fill="#000"/><g fill="#d8dde8"><rect x="776.40" y="449.90" width="1.2" height="1.2"/><rect x="776.40" y="452.70" width="1.2" height="1.2"/><rect x="776.40" y="455.50" width="1.2" height="1.2"/><rect x="779.20" y="444.30" width="1.2" height="1.2"/><rect x="779.20" y="447.10" width="1.2" height="1.2"/><rect x="779.20" y="449.90" width="1.2" height="1.2"/><rect x="779.20" y="452.70" width="1.2" height="1.2"/><rect x="779.20" y="455.50" width="1.2" height="1.2"/><rect x="779.20" y="458.30" width="1.2" height="1.2"/><rect x="779.20" y="461.10" width="1.2" height="1.2"/><rect x="782.00" y="441.50" width="1.2" height="1.2"/><rect x="782.00" y="444.30" width="1.2" height="1.2"/><rect x="782.00" y="447.10" width="1.2" height="1.2"/><rect x="782.00" y="449.90" width="1.2" height="1.2"/><rect x="782.00" y="452.70" width="1.2" height="1.2"/><rect x="782.00" y="455.50" width="1.2" height="1.2"/><rect x="782.00" y="458.30" width="1.2" height="1.2"/><rect x="782.00" y="461.10" width="1.2" height="1.2"/><rect x="782.00" y="463.90" width="1.2" height="1.2"/><rect x="784.80" y="441.50" width="1.2" height="1.2"/><rect x="784.80" y="444.30" width="1.2" height="1.2"/><rect x="784.80" y="447.10" width="1.2" height="1.2"/><rect x="784.80" y="449.90" width="1.2" height="1.2"/><rect x="784.80" y="452.70" width="1.2" height="1.2"/><rect x="784.80" y="455.50" width="1.2" height="1.2"/><rect x="784.80" y="458.30" width="1.2" height="1.2"/><rect x="784.80" y="461.10" width="1.2" height="1.2"/><rect x="784.80" y="463.90" width="1.2" height="1.2"/><rect x="787.60" y="438.70" width="1.2" height="1.2"/><rect x="787.60" y="441.50" width="1.2" height="1.2"/><rect x="787.60" y="444.30" width="1.2" height="1.2"/><rect x="787.60" y="447.10" width="1.2" height="1.2"/><rect x="787.60" y="449.90" width="1.2" height="1.2"/><rect x="787.60" y="452.70" width="1.2" height="1.2"/><rect x="787.60" y="455.50" width="1.2" height="1.2"/><rect x="787.60" y="458.30" width="1.2" height="1.2"/><rect x="787.60" y="461.10" width="1.2" height="1.2"/><rect x="787.60" y="463.90" width="1.2" height="1.2"/><rect x="787.60" y="466.70" width="1.2" height="1.2"/><rect x="790.40" y="438.70" width="1.2" height="1.2"/><rect x="790.40" y="441.50" width="1.2" height="1.2"/><rect x="790.40" y="444.30" width="1.2" height="1.2"/><rect x="790.40" y="447.10" width="1.2" height="1.2"/><rect x="790.40" y="449.90" width="1.2" height="1.2"/><rect x="790.40" y="452.70" width="1.2" height="1.2"/><rect x="790.40" y="455.50" width="1.2" height="1.2"/><rect x="790.40" y="458.30" width="1.2" height="1.2"/><rect x="790.40" y="461.10" width="1.2" height="1.2"/><rect x="790.40" y="463.90" width="1.2" height="1.2"/><rect x="790.40" y="466.70" width="1.2" height="1.2"/><rect x="793.20" y="438.70" width="1.2" height="1.2"/><rect x="793.20" y="441.50" width="1.2" height="1.2"/><rect x="793.20" y="444.30" width="1.2" height="1.2"/><rect x="793.20" y="447.10" width="1.2" height="1.2"/><rect x="793.20" y="449.90" width="1.2" height="1.2"/><rect x="793.20" y="452.70" width="1.2" height="1.2"/><rect x="793.20" y="455.50" width="1.2" height="1.2"/><rect x="793.20" y="458.30" width="1.2" height="1.2"/><rect x="793.20" y="461.10" width="1.2" height="1.2"/><rect x="793.20" y="463.90" width="1.2" height="1.2"/><rect x="793.20" y="466.70" width="1.2" height="1.2"/><rect x="796.00" y="441.50" width="1.2" height="1.2"/><rect x="796.00" y="444.30" width="1.2" height="1.2"/><rect x="796.00" y="447.10" width="1.2" height="1.2"/><rect x="796.00" y="449.90" width="1.2" height="1.2"/><rect x="796.00" y="452.70" width="1.2" height="1.2"/><rect x="796.00" y="455.50" width="1.2" height="1.2"/><rect x="796.00" y="458.30" width="1.2" height="1.2"/><rect x="796.00" y="461.10" width="1.2" height="1.2"/><rect x="796.00" y="463.90" width="1.2" height="1.2"/><rect x="798.80" y="441.50" width="1.2" height="1.2"/><rect x="798.80" y="444.30" width="1.2" height="1.2"/><rect x="798.80" y="447.10" width="1.2" height="1.2"/><rect x="798.80" y="449.90" width="1.2" height="1.2"/><rect x="798.80" y="452.70" width="1.2" height="1.2"/><rect x="798.80" y="455.50" width="1.2" height="1.2"/><rect x="798.80" y="458.30" width="1.2" height="1.2"/><rect x="798.80" y="461.10" width="1.2" height="1.2"/><rect x="798.80" y="463.90" width="1.2" height="1.2"/><rect x="801.60" y="444.30" width="1.2" height="1.2"/><rect x="801.60" y="447.10" width="1.2" height="1.2"/><rect x="801.60" y="449.90" width="1.2" height="1.2"/><rect x="801.60" y="452.70" width="1.2" height="1.2"/><rect x="801.60" y="455.50" width="1.2" height="1.2"/><rect x="801.60" y="458.30" width="1.2" height="1.2"/><rect x="801.60" y="461.10" width="1.2" height="1.2"/><rect x="804.40" y="449.90" width="1.2" height="1.2"/><rect x="804.40" y="452.70" width="1.2" height="1.2"/><rect x="804.40" y="455.50" width="1.2" height="1.2"/></g><rect x="747.9" y="434.3" width="16.1" height="7" rx="3.5" fill="#a3bcc8"/><text x="689.5" y="432" font-family="Liberation Mono" font-size="6" fill="#c8d0f0">In vm</text><g font-family="Liberation Sans" font-size="5.6" fill="#c8d0f0"><text transform="translate(748 480.5) rotate(-90)">Vcc</text><text transform="translate(754.4 480.5) rotate(-90)">Trig</text><text transform="translate(760.7 480.5) rotate(-90)">Echo</text><text transform="translate(767.2 480.5) rotate(-90)">Gnd</text></g><path d="M746.2 482.5V489.5M765.4 482.5V489.5" stroke="#4a78b4" stroke-width="2.2"/><path d="M752.6 482.5V489.5M758.9 482.5V489.5" stroke="#000" stroke-width="2.2"/><path d="M327.3 122.8H272.8V495.2H497" stroke="#2c2a42" stroke-width="1.35" fill="none" stroke-linejoin="miter"/><path d="M298.7 297V404.6H497" stroke="#2c2a42" stroke-width="1.35" fill="none" stroke-linejoin="miter"/><path d="M305 297V398.6H497" stroke="#2c2a42" stroke-width="1.35" fill="none" stroke-linejoin="miter"/><path d="M357.3 381V398.6" stroke="#2c2a42" stroke-width="1.35" fill="none" stroke-linejoin="miter"/><path d="M363.6 381V404.6" stroke="#2c2a42" stroke-width="1.35" fill="none" stroke-linejoin="miter"/><path d="M354.9 469.4H357.2V456.2H497" stroke="#2c2a42" stroke-width="1.35" fill="none" stroke-linejoin="miter"/><path d="M354.9 482.2H360.3V462.8H497" stroke="#2c2a42" stroke-width="1.35" fill="none" stroke-linejoin="miter"/><path d="M363.5 570H364.2V469.4H497" stroke="#2c2a42" stroke-width="1.35" fill="none" stroke-linejoin="miter"/><path d="M363.5 544.3H477V527.8H617" stroke="#2c2a42" stroke-width="1.35" fill="none" stroke-linejoin="miter"/><path d="M363.5 557.1H497" stroke="#2c2a42" stroke-width="1.35" fill="none" stroke-linejoin="miter"/><path d="M503 329V349.3H603.5V378.6" stroke="#2c2a42" stroke-width="1.35" fill="none" stroke-linejoin="miter"/><path d="M509.5 329V339.8H597.3V371.7" stroke="#2c2a42" stroke-width="1.35" fill="none" stroke-linejoin="miter"/><path d="M515.9 329V371.7H590.9" stroke="#2c2a42" stroke-width="1.35" fill="none" stroke-linejoin="miter"/><path d="M497 488.7H758.9" stroke="#2c2a42" stroke-width="1.35" fill="none" stroke-linejoin="miter"/><path d="M497 501.9H752.6V489" stroke="#2c2a42" stroke-width="1.35" fill="none" stroke-linejoin="miter"/><path d="M668.3 439.8V430.4H682" stroke="#2c2a42" stroke-width="1.35" fill="none" stroke-linejoin="miter"/><circle cx="357.3" cy="398.6" r="2" fill="#222"/><circle cx="363.6" cy="404.6" r="2" fill="#222"/></g></svg>
<div class="a" style="left:1005px;top:59px;width:22px;height:528px;background:#fff;border-left:1px solid #a9a9ab;border-top:1px solid #a9a9ab;border-bottom:1px solid #a9a9ab"></div>
<div class="a" style="left:1005.5px;top:592.5px;width:22px;height:170px;background:#231d3c;border-left:1px solid #14102c;border-top:1px solid #14102c"></div>
<div class="a" style="left:203px;top:647px;width:202px;height:115px;overflow:hidden">
<div class="a" style="left:8px;top:9px;white-space:pre;font-weight:bold;font-size:12px;line-height:15px;color:#111">Время симуляции:</div>
<div class="a" style="left:8px;top:24px;white-space:pre;font-weight:bold;font-size:11.6px;line-height:15px;color:#a8000e">00:01:42 s  112 ms  115 µs  187 ns  !</div>
<div class="a" style="left:8px;top:48px;white-space:pre;font-weight:bold;font-size:12px;line-height:15px;color:#111">Целевая скорость:</div>
<div class="a" style="left:8px;top:63px;white-space:pre;font-weight:bold;font-size:12px;line-height:15px;color:#111">Real Speed:</div>
<div class="a" style="left:8px;top:84.5px;white-space:pre;font-weight:bold;font-size:12px;line-height:15px;color:#111">Загрузка движка:</div>
<div class="a" style="left:8px;top:100px;white-space:pre;font-weight:bold;font-size:12px;line-height:15px;color:#111">Загрузка обновления:</div>
<div class="a" style="left:154px;top:48px;white-space:pre;font-weight:bold;font-size:12px;line-height:15px;color:#12128c">100.00 %</div>
<div class="a" style="left:154px;top:63px;white-space:pre;font-weight:bold;font-size:12px;line-height:15px;color:#12128c">064.68 %</div>
<div class="a" style="left:154px;top:84.5px;white-space:pre;font-weight:bold;font-size:12px;line-height:15px;color:#12128c">100.48 %</div>
<div class="a" style="left:154px;top:100px;white-space:pre;font-weight:bold;font-size:12px;line-height:15px;color:#12128c">000.32 %</div>
</div>
<div class="a" style="left:409px;top:651.5px;width:578px;height:111px;background:#231d3c"></div>
<div class="a mono" style="left:418px;top:653px;white-space:pre;font-size:11.4px;letter-spacing:-0.34px;line-height:14px"><span style="color:#d5cda4">send: il)  (display-print \\xD0\x9F\xD1\x80\xD0</span></div>
<div class="a mono" style="left:418px;top:667px;white-space:pre;font-size:11.4px;letter-spacing:-0.34px;line-height:14px"><span style="color:#d5cda4">send: \xB8\xD0\xB2\xD0\xB5\xD1\x82!\)  (display-show)  (matrix-setup </span><span style="color:#7f87ea">49 5</span></div>
<div class="a mono" style="left:418px;top:681px;white-space:pre;font-size:11.4px;letter-spacing:-0.34px;line-height:14px"><span style="color:#d5cda4">send:  </span><span style="color:#7f87ea">1</span><span style="color:#d5cda4">)  (set-cursor </span><span style="color:#7f87ea">0 0</span><span style="color:#d5cda4">)</span></div>
<div class="a mono" style="left:418px;top:695px;white-space:pre;font-size:11.4px;letter-spacing:-0.34px;line-height:14px"><span style="color:#d5cda4">send:  (set-text-wrap nil)  (display-print</span></div>
<div class="a mono" style="left:418px;top:709px;white-space:pre;font-size:11.4px;letter-spacing:-0.34px;line-height:14px"><span style="color:#d5cda4">send:  \\xD0\x9F\xD1\x80\xD0\xB8\xD0\xB2\xD0\xB5\xD1\x82!\)  (display-show)(loop))\r\n</span></div>
<div class="a" style="left:986px;top:651px;width:15px;height:111px;background:#e9e9ea;border-left:1px solid #c4c4c4;border-right:1px solid #c4c4c4"></div>
<div class="a" style="left:987px;top:652px;width:13px;height:14px;background:#fdfdfd;border-bottom:1px solid #c4c4c4"></div>
<div class="a" style="left:989.5px;top:656px;width:0;height:0;border-left:4px solid transparent;border-right:4px solid transparent;border-bottom:5px solid #9a9ca6"></div>
<div class="a" style="left:987px;top:727px;width:13px;height:27px;background:#fdfdfd;border-top:1px solid #c4c4c4"></div>
<div class="a" style="left:987px;top:754px;width:13px;height:8px;background:#fdfdfd;border-top:1px solid #c4c4c4"></div>
<div class="a" style="left:989.5px;top:758px;width:0;height:0;border-left:4px solid transparent;border-right:4px solid transparent;border-top:5px solid #9a9ca6"></div>
<svg class="a" style="left:0;top:0" width="1027" height="762"><g fill="#9a9a9a"><circle cx="595.5" cy="648.5" r="0.75"/><circle cx="406.4" cy="703.4" r="0.75"/><circle cx="200.5" cy="389.4" r="0.75"/><circle cx="598.5" cy="648.5" r="0.75"/><circle cx="406.4" cy="706.4" r="0.75"/><circle cx="200.5" cy="392.4" r="0.75"/><circle cx="601.5" cy="648.5" r="0.75"/><circle cx="406.4" cy="709.4" r="0.75"/><circle cx="200.5" cy="395.4" r="0.75"/><circle cx="604.5" cy="648.5" r="0.75"/><circle cx="406.4" cy="712.4" r="0.75"/><circle cx="200.5" cy="398.4" r="0.75"/><circle cx="607.5" cy="648.5" r="0.75"/><circle cx="406.4" cy="715.4" r="0.75"/><circle cx="200.5" cy="401.4" r="0.75"/><circle cx="610.5" cy="648.5" r="0.75"/><circle cx="406.4" cy="718.4" r="0.75"/><circle cx="200.5" cy="404.4" r="0.75"/><circle cx="1003.4" cy="398.4" r="0.75"/><circle cx="1003.4" cy="401.4" r="0.75"/><circle cx="1003.4" cy="404.4" r="0.75"/></g></svg>
<div class="a" style="left:779px;top:102px;width:260px;height:294px;background:#e4e5e9;border-left:1px solid #f2f2f4;border-top:1px solid #f2f2f4;border-bottom:1px solid #d6d7db;border-radius:2px 0 0 0"></div>
<div class="a" style="left:783px;top:130px;width:250px;height:262px;background:#f2f3f5"></div>
<svg class="a" style="left:785px;top:106px" width="24" height="22"><g transform="translate(0 0)"><rect x="14" y="3" width="5.9" height="13.8" rx="2.6" fill="#0c0640"/><path d="M8 2.9H16.3V16.9H8A2.2 2.2 0 0 1 5.8 14.7V5.1A2.2 2.2 0 0 1 8 2.9Z" fill="#e6e48e" stroke="#4a3c86" stroke-width="0.9"/><path d="M6.2 7.4H10.6V4.6M6.2 12.6H14.8M7.2 16.5V14.8H11.8" stroke="#3a3360" stroke-width="0.9" fill="none"/><path d="M6.4 10H11.2" stroke="#8c8a6a" stroke-width="1.6"/><circle cx="11.4" cy="4.4" r="1" fill="#c8c0ec" stroke="#3a3360" stroke-width="0.6"/><circle cx="12" cy="10" r="1.1" fill="#6a62b4"/><circle cx="15.2" cy="12.6" r="1.1" fill="#c8c0ec" stroke="#3a3360" stroke-width="0.6"/><circle cx="12.3" cy="14.8" r="1" fill="#c8c0ec" stroke="#3a3360" stroke-width="0.6"/></g></svg>
<div class="a" style="left:1020px;top:108px;white-space:pre;font-weight:bold;font-size:13.4px;color:#8b8e99;line-height:16px">U</div>
<div class="a" style="left:787px;top:134px;width:49px;height:24px;background:linear-gradient(#fdfdfd,#f0f0f0);border:1px solid #b9b9bc;border-radius:3px"></div>
<div class="a" style="left:794.5px;top:139px;white-space:pre;font-size:12.2px;color:#4a4a4c;line-height:16px">Пауза</div>
<div class="a" style="left:787px;top:167px;width:240px;height:1px;background:#c9cacd"></div>
<div class="a" style="left:787px;top:182px;white-space:pre;font-size:11.7px;color:#4a4a4c;line-height:16px">Текст:</div>
<div class="a" style="left:825px;top:177px;width:210px;height:25px;background:#fff;border:1px solid #5b8fd6;border-radius:3px"></div>
<div class="a" style="left:828px;top:181px;white-space:pre;font-size:13px;color:#333;line-height:16px">)</div>
<div class="a" style="left:788px;top:207px;width:245px;height:151px;background:#231d3c"></div>
<div class="a" style="left:796.8px;top:209px;width:32.5px;height:11.5px;background:#fbea4a"></div>
<div class="a" style="left:796.8px;top:236.4px;width:32.5px;height:11.5px;background:#fbea4a"></div>
<div class="a" style="left:788px;top:207px;width:239px;height:151px;overflow:hidden">
<div class="a mono" style="left:9px;top:0.9px;white-space:pre;font-size:11.4px;letter-spacing:-0.34px;line-height:14px"><span style="color:#2a2418">Error</span><span style="color:#d5cda4">: 'loop' escape!</span></div>
<div class="a mono" style="left:9px;top:14.6px;white-space:pre;font-size:11.4px;letter-spacing:-0.34px;line-height:14px"><span style="color:#7f87ea">1343&gt;</span><span style="color:#d5cda4"> ~</span></div>
<div class="a mono" style="left:9px;top:28.7px;white-space:pre;font-size:11.4px;letter-spacing:-0.34px;line-height:14px"><span style="color:#2a2418">Error</span><span style="color:#d5cda4">: undefined: ~</span></div>
<div class="a mono" style="left:9px;top:42.4px;white-space:pre;font-size:11.4px;letter-spacing:-0.34px;line-height:14px"><span style="color:#7f87ea">1343&gt;</span><span style="color:#d5cda4"> (progn  (neomatrix-setup </span><span style="color:#7f87ea">6 40</span></div>
<div class="a mono" style="left:9px;top:55.8px;white-space:pre;font-size:11.4px;letter-spacing:-0.34px;line-height:14px"><span style="color:#7f87ea">8</span><span style="color:#d5cda4">)  (set-cursor </span><span style="color:#7f87ea">0 0</span><span style="color:#d5cda4">)  (set-text-wrap</span></div>
<div class="a mono" style="left:9px;top:68.9px;white-space:pre;font-size:11.4px;letter-spacing:-0.34px;line-height:14px"><span style="color:#d5cda4">nil)  (display-print </span><span style="color:#43c46a">&quot;Привет!&quot;</span><span style="color:#d5cda4">)</span></div>
<div class="a mono" style="left:9px;top:81.6px;white-space:pre;font-size:11.4px;letter-spacing:-0.34px;line-height:14px"><span style="color:#43c46a">(display-show)  (matrix-setup 49 5 1</span></div>
<div class="a mono" style="left:9px;top:94.6px;white-space:pre;font-size:11.4px;letter-spacing:-0.34px;line-height:14px"><span style="color:#43c46a">(set-cursor 0 0)  (set-text-wrap nil</span></div>
<div class="a mono" style="left:9px;top:107.5px;white-space:pre;font-size:11.4px;letter-spacing:-0.34px;line-height:14px"><span style="color:#43c46a">(display-print &quot;Привет!&quot;)  (display-</span></div>
<div class="a mono" style="left:9px;top:120.5px;white-space:pre;font-size:11.4px;letter-spacing:-0.34px;line-height:14px"><span style="color:#d5cda4">show)(loop))</span></div>
</div>
<div class="a" style="left:787px;top:363px;width:50px;height:25px;background:linear-gradient(#fdfdfd,#f0f0f0);border:1px solid #b9b9bc;border-radius:3px"></div>
<div class="a" style="left:797.5px;top:368px;white-space:pre;font-size:12px;color:#4a4a4c;line-height:16px">Clear</div>
<div class="a" style="left:844px;top:368px;white-space:pre;font-size:12.2px;color:#4a4a4c;line-height:16px">Вход</div>
</body></html>
